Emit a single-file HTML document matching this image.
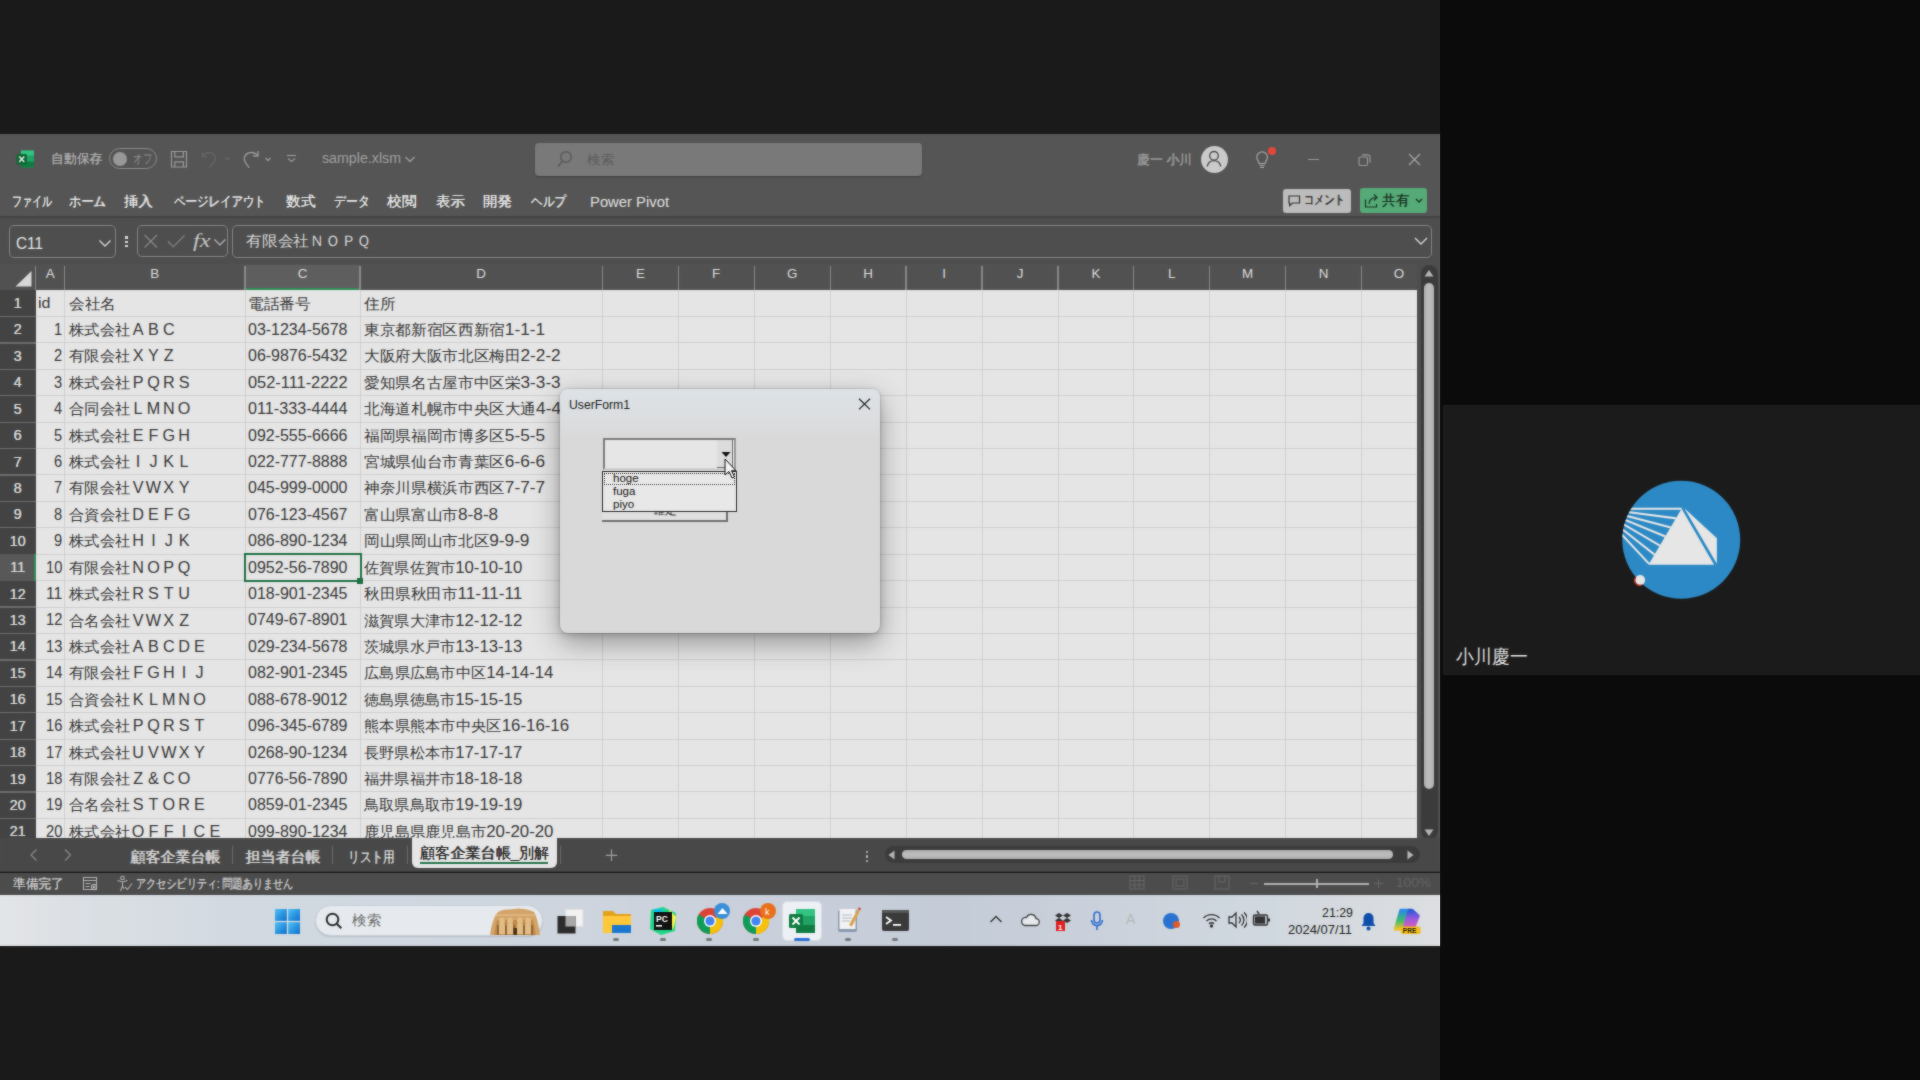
<!DOCTYPE html><html><head><meta charset="utf-8"><style>
*{margin:0;padding:0;box-sizing:border-box}
html,body{width:1920px;height:1080px;overflow:hidden;background:#0b0b0b;font-family:"Liberation Sans",sans-serif}
.a{position:absolute}
.t{position:absolute;white-space:nowrap;line-height:1;transform-origin:0 0}
.fit{display:inline-block}
.d{font-size:16.5px;line-height:0}.fw{display:inline-block;width:15px;text-align:center;font-size:15.8px;line-height:0}</style></head><body><div style="position:absolute;left:0;top:0;width:1920px;height:1080px"><div class="a" style="left:0;top:0;width:1440px;height:1080px;background:#1b1b1b"></div>
<div class="a" style="left:0;top:134px;width:1440px;height:83px;background:#555555"></div>
<div class="a" style="left:0;top:216px;width:1440px;height:2px;background:#444444"></div>
<div class="a" style="left:0;top:218px;width:1440px;height:46px;background:#4f4f4f"></div>
<div class="a" style="left:0;top:264px;width:1440px;height:26px;background:#525252"></div>
<svg class="a" style="left:16px;top:150px" width="19" height="18" viewBox="0 0 19 18">
<rect x="5" y="0.5" width="13" height="17" rx="1" fill="#21a366"/>
<rect x="5" y="0.5" width="13" height="5" fill="#33c481"/>
<rect x="5" y="11.5" width="13" height="6" fill="#107c41"/>
<rect x="0.5" y="4" width="10.5" height="10.5" rx="1.5" fill="#0e6a34"/>
<path d="M3.2 6.6 L8.3 12 M8.3 6.6 L3.2 12" stroke="#e8e8e8" stroke-width="1.5"/>
</svg>
<div class="t fit" style="left:51px;top:151.5px;font-size:13.2px;color:#a8a8a8;text-shadow:0.3px 0 0 #a8a8a8;--w:51px;transform:scaleX(0.9808);">自動保存</div>
<div class="a" style="left:109px;top:148px;width:48px;height:21px;border:1.3px solid #8a8a8a;border-radius:11px"></div>
<div class="a" style="left:112.5px;top:151.5px;width:14px;height:14px;border-radius:7px;background:#999"></div>
<div class="t fit" style="left:133px;top:152.5px;font-size:12.5px;color:#8f8f8f;--w:19px;transform:scaleX(0.7308);">オフ</div>
<svg class="a" style="left:170px;top:150px" width="19" height="19" viewBox="0 0 19 19" fill="none" stroke="#9a9a9a" stroke-width="1.2">
<path d="M1.5 1.5h15v15.5h-15z"/><path d="M4.8 1.5v5.3h8.6V1.5"/><path d="M4.8 17v-5.2h8.6V17"/></svg>
<svg class="a" style="left:200px;top:150px" width="34" height="19" viewBox="0 0 34 19" fill="none" stroke="#6a6a6a" stroke-width="1.2">
<path d="M2.5 2v4.5H7"/><path d="M3 6C5.5 2 13 1.5 15 6.5c1.5 4-3 8.5-5.5 11"/><path d="M25 7.5l2.5 2.5 2.5-2.5"/></svg>
<svg class="a" style="left:242px;top:150px" width="34" height="19" viewBox="0 0 34 19" fill="none" stroke="#9a9a9a" stroke-width="1.3">
<path d="M16 1v5h-5"/><path d="M15.5 5.5C13 1.5 5 1 2.5 7c-1.2 3 1.5 7 4.8 10.8"/><path d="M23.5 8l2.5 2.5 2.5-2.5"/></svg>
<svg class="a" style="left:286px;top:154px" width="11" height="10" viewBox="0 0 11 10" fill="none" stroke="#9a9a9a" stroke-width="1.2">
<path d="M1 1.5h9"/><path d="M2 4.5l3.5 3 3.5-3"/></svg>
<div class="t fit" style="left:322px;top:151px;font-size:14px;color:#a0a0a0;--w:79px;transform:scaleX(1.0155);">sample.xlsm</div>
<svg class="a" style="left:404px;top:155px" width="12" height="9" viewBox="0 0 12 9" fill="none" stroke="#a0a0a0" stroke-width="1.3">
<path d="M1.5 2l4.5 4.5 4.5-4.5"/></svg>
<div class="a" style="left:535px;top:143px;width:387px;height:33px;background:#797979;border-radius:4px;box-shadow:0 1px 1.5px rgba(0,0,0,.25)"></div>
<svg class="a" style="left:556px;top:150px" width="20" height="19" viewBox="0 0 20 19" fill="none" stroke="#5a5a5a" stroke-width="1.4">
<circle cx="10" cy="7" r="5.3"/><path d="M6.3 11L2 16.5"/></svg>
<div class="t fit" style="left:587px;top:152.5px;font-size:13px;color:#5c5c5c;--w:27px;transform:scaleX(1.0385);">検索</div>
<div class="t fit" style="left:1137px;top:152.5px;font-size:13px;color:#9a9a9a;text-shadow:0.35px 0 0 #9a9a9a;--w:55px;transform:scaleX(0.9888);">慶一 小川</div>
<div class="a" style="left:1201px;top:146px;width:26.5px;height:26.5px;border-radius:14px;background:#cacaca"></div>
<svg class="a" style="left:1201px;top:146px" width="26" height="26" viewBox="0 0 26 26" fill="none" stroke="#4a4a4a" stroke-width="1.3">
<circle cx="13" cy="9.8" r="4.3"/><path d="M6.2 20.5c1-4.2 3.6-5.8 6.8-5.8s5.8 1.6 6.8 5.8"/></svg>
<svg class="a" style="left:1255px;top:150px" width="16" height="19" viewBox="0 0 18 20" fill="none" stroke="#a5a5a5" stroke-width="1.3">
<path d="M2 7.5a6 6 0 1 1 12 0c0 2.8-2.2 4.2-2.6 7H4.6C4.2 11.7 2 10.3 2 7.5z"/><path d="M5 16.5h6M5.8 18.8h4.4"/></svg>
<div class="a" style="left:1268px;top:146.5px;width:8px;height:8px;border-radius:4px;background:#e5473b"></div>
<div class="a" style="left:1308px;top:158.5px;width:11px;height:1.3px;background:#999"></div>
<svg class="a" style="left:1357px;top:152.5px" width="15" height="14" viewBox="0 0 15 14" fill="none" stroke="#9a9a9a" stroke-width="1.2">
<rect x="2" y="4" width="8.5" height="8.5" rx="1.5"/><path d="M5 1.8h5.5a2.5 2.5 0 0 1 2.5 2.5v5.5"/></svg>
<svg class="a" style="left:1408px;top:153px" width="13" height="13" viewBox="0 0 13 13" fill="none" stroke="#a5a5a5" stroke-width="1.2">
<path d="M1 1l11 11M12 1L1 12"/></svg>
<div class="t fit" style="left:11.8px;top:193.5px;font-size:14px;color:#e4e4e4;text-shadow:0.4px 0 0 #e4e4e4;--w:40.2px;transform:scaleX(0.7179);">ファイル</div>
<div class="t fit" style="left:69.4px;top:193.5px;font-size:14px;color:#e4e4e4;text-shadow:0.4px 0 0 #e4e4e4;--w:36.6px;transform:scaleX(0.8714);">ホーム</div>
<div class="t fit" style="left:124.2px;top:193.5px;font-size:14px;color:#e4e4e4;text-shadow:0.4px 0 0 #e4e4e4;--w:28.7px;transform:scaleX(1.0250);">挿入</div>
<div class="t fit" style="left:173.8px;top:193.5px;font-size:14px;color:#e4e4e4;text-shadow:0.4px 0 0 #e4e4e4;--w:91.5px;transform:scaleX(0.8170);">ページレイアウト</div>
<div class="t fit" style="left:286.29999999999995px;top:193.5px;font-size:14px;color:#e4e4e4;text-shadow:0.4px 0 0 #e4e4e4;--w:29.5px;transform:scaleX(1.0536);">数式</div>
<div class="t fit" style="left:333.9px;top:193.5px;font-size:14px;color:#e4e4e4;text-shadow:0.4px 0 0 #e4e4e4;--w:35.5px;transform:scaleX(0.8452);">データ</div>
<div class="t fit" style="left:387.4px;top:193.5px;font-size:14px;color:#e4e4e4;text-shadow:0.4px 0 0 #e4e4e4;--w:29.5px;transform:scaleX(1.0536);">校閲</div>
<div class="t fit" style="left:435.7px;top:193.5px;font-size:14px;color:#e4e4e4;text-shadow:0.4px 0 0 #e4e4e4;--w:28.7px;transform:scaleX(1.0250);">表示</div>
<div class="t fit" style="left:483.2px;top:193.5px;font-size:14px;color:#e4e4e4;text-shadow:0.4px 0 0 #e4e4e4;--w:28.7px;transform:scaleX(1.0250);">開発</div>
<div class="t fit" style="left:530.6999999999999px;top:193.5px;font-size:14px;color:#e4e4e4;text-shadow:0.4px 0 0 #e4e4e4;--w:34.9px;transform:scaleX(0.8310);">ヘルプ</div>
<div class="t fit" style="left:589.5px;top:194.5px;font-size:14px;color:#e0e0e0;--w:79px;transform:scaleX(1.0575);">Power Pivot</div>
<div class="a" style="left:1283px;top:188.8px;width:68px;height:23.8px;background:#bdbdbd;border-radius:3px"></div>
<svg class="a" style="left:1288px;top:194.5px" width="13" height="13" viewBox="0 0 13 13" fill="none" stroke="#333" stroke-width="1.2">
<path d="M1 1h10.5v7H4.5l-2.8 2.6V8H1z"/></svg>
<div class="t fit" style="left:1304px;top:193px;font-size:13px;color:#333;text-shadow:0.35px 0 0 #333;--w:40.5px;transform:scaleX(0.7788);">コメント</div>
<div class="a" style="left:1360px;top:188px;width:67px;height:25px;background:#55aa77;border-radius:3px"></div>
<svg class="a" style="left:1364px;top:192px" width="16" height="17" viewBox="0 0 16 17" fill="none" stroke="#1b3524" stroke-width="1.2">
<path d="M1.5 7.5v7.5h11v-3"/><path d="M5 12c0-4.2 3-6.5 7-6.5"/><path d="M10 2.5l3 3-3 3"/></svg>
<div class="t fit" style="left:1382px;top:194px;font-size:13.5px;color:#1b3524;text-shadow:0.35px 0 0 #1b3524;--w:27px;transform:scaleX(0.9643);">共有</div>
<svg class="a" style="left:1414px;top:197px" width="10" height="7" viewBox="0 0 10 7" fill="none" stroke="#1b3524" stroke-width="1.3">
<path d="M2 2l3 3 3-3"/></svg>
<div class="a" style="left:8.5px;top:225.2px;width:107.5px;height:32.5px;border:1.2px solid #828282;border-radius:5px"></div>
<div class="t fit" style="left:16px;top:236px;font-size:16px;color:#e6e6e6;--w:27px;transform:scaleX(0.9584);">C11</div>
<svg class="a" style="left:98px;top:238px" width="14" height="10" viewBox="0 0 14 10" fill="none" stroke="#d4d4d4" stroke-width="1.4">
<path d="M1.5 2.5l5.5 5.5 5.5-5.5"/></svg>
<div class="a" style="left:125.2px;top:236.3px;width:2.6px;height:2.6px;background:#d8d8d8"></div>
<div class="a" style="left:125.2px;top:240.7px;width:2.6px;height:2.6px;background:#d8d8d8"></div>
<div class="a" style="left:125.2px;top:244.9px;width:2.6px;height:2.6px;background:#d8d8d8"></div>
<div class="a" style="left:137px;top:225.3px;width:90.8px;height:32.2px;border:1.2px solid #828282;border-radius:5px"></div>
<svg class="a" style="left:137px;top:225px" width="92" height="33" viewBox="0 0 92 33" fill="none" stroke-width="1.1">
<path d="M7.5 10l12.5 12.5M20 10L7.5 22.5" stroke="#8a8a8a"/><path d="M31 16.5l5.3 5.3L47.5 10.3" stroke="#8a8a8a"/><path d="M77.5 14.5l5.4 5.4 5.4-5.4" stroke="#b8b8b8" stroke-width="1.2"/></svg>
<div class="t fit" style="left:192.5px;top:231px;font-size:19px;color:#c8c8c8;font-style:italic;font-family:'Liberation Serif',serif;--w:17.5px;transform:scaleX(1.2756);">fx</div>
<div class="a" style="left:232px;top:225.2px;width:1199.5px;height:32.5px;border:1.2px solid #828282;border-radius:5px"></div>
<div class="t fit" style="left:246px;top:234px;font-size:14.5px;color:#d6d6d6;--w:125px;transform:scaleX(1.0504);">有限会社ＮＯＰＱ</div>
<svg class="a" style="left:1413px;top:236px" width="16" height="10" viewBox="0 0 16 10" fill="none" stroke="#d4d4d4" stroke-width="1.4">
<path d="M2 2l6 6 6-6"/></svg>
<div class="a" style="left:35.5px;top:290px;width:1381.8px;height:547.5px;background:#e5e5e5"></div>
<div class="a" style="left:0;top:290px;width:35.5px;height:547.5px;background:#444444"></div>
<div class="a" style="left:35.5px;top:315.92px;width:1381.8px;height:1px;background:#d0d0d0"></div>
<div class="a" style="left:0;top:315.82px;width:35.5px;height:1.3px;background:#6c6c6c"></div>
<div class="a" style="left:35.5px;top:342.34px;width:1381.8px;height:1px;background:#d0d0d0"></div>
<div class="a" style="left:0;top:342.24px;width:35.5px;height:1.3px;background:#6c6c6c"></div>
<div class="a" style="left:35.5px;top:368.76px;width:1381.8px;height:1px;background:#d0d0d0"></div>
<div class="a" style="left:0;top:368.66px;width:35.5px;height:1.3px;background:#6c6c6c"></div>
<div class="a" style="left:35.5px;top:395.18px;width:1381.8px;height:1px;background:#d0d0d0"></div>
<div class="a" style="left:0;top:395.08px;width:35.5px;height:1.3px;background:#6c6c6c"></div>
<div class="a" style="left:35.5px;top:421.60px;width:1381.8px;height:1px;background:#d0d0d0"></div>
<div class="a" style="left:0;top:421.50px;width:35.5px;height:1.3px;background:#6c6c6c"></div>
<div class="a" style="left:35.5px;top:448.02px;width:1381.8px;height:1px;background:#d0d0d0"></div>
<div class="a" style="left:0;top:447.92px;width:35.5px;height:1.3px;background:#6c6c6c"></div>
<div class="a" style="left:35.5px;top:474.44px;width:1381.8px;height:1px;background:#d0d0d0"></div>
<div class="a" style="left:0;top:474.34px;width:35.5px;height:1.3px;background:#6c6c6c"></div>
<div class="a" style="left:35.5px;top:500.86px;width:1381.8px;height:1px;background:#d0d0d0"></div>
<div class="a" style="left:0;top:500.76px;width:35.5px;height:1.3px;background:#6c6c6c"></div>
<div class="a" style="left:35.5px;top:527.28px;width:1381.8px;height:1px;background:#d0d0d0"></div>
<div class="a" style="left:0;top:527.18px;width:35.5px;height:1.3px;background:#6c6c6c"></div>
<div class="a" style="left:35.5px;top:553.70px;width:1381.8px;height:1px;background:#d0d0d0"></div>
<div class="a" style="left:0;top:553.60px;width:35.5px;height:1.3px;background:#6c6c6c"></div>
<div class="a" style="left:35.5px;top:580.12px;width:1381.8px;height:1px;background:#d0d0d0"></div>
<div class="a" style="left:0;top:580.02px;width:35.5px;height:1.3px;background:#6c6c6c"></div>
<div class="a" style="left:35.5px;top:606.54px;width:1381.8px;height:1px;background:#d0d0d0"></div>
<div class="a" style="left:0;top:606.44px;width:35.5px;height:1.3px;background:#6c6c6c"></div>
<div class="a" style="left:35.5px;top:632.96px;width:1381.8px;height:1px;background:#d0d0d0"></div>
<div class="a" style="left:0;top:632.86px;width:35.5px;height:1.3px;background:#6c6c6c"></div>
<div class="a" style="left:35.5px;top:659.38px;width:1381.8px;height:1px;background:#d0d0d0"></div>
<div class="a" style="left:0;top:659.28px;width:35.5px;height:1.3px;background:#6c6c6c"></div>
<div class="a" style="left:35.5px;top:685.80px;width:1381.8px;height:1px;background:#d0d0d0"></div>
<div class="a" style="left:0;top:685.70px;width:35.5px;height:1.3px;background:#6c6c6c"></div>
<div class="a" style="left:35.5px;top:712.22px;width:1381.8px;height:1px;background:#d0d0d0"></div>
<div class="a" style="left:0;top:712.12px;width:35.5px;height:1.3px;background:#6c6c6c"></div>
<div class="a" style="left:35.5px;top:738.64px;width:1381.8px;height:1px;background:#d0d0d0"></div>
<div class="a" style="left:0;top:738.54px;width:35.5px;height:1.3px;background:#6c6c6c"></div>
<div class="a" style="left:35.5px;top:765.06px;width:1381.8px;height:1px;background:#d0d0d0"></div>
<div class="a" style="left:0;top:764.96px;width:35.5px;height:1.3px;background:#6c6c6c"></div>
<div class="a" style="left:35.5px;top:791.48px;width:1381.8px;height:1px;background:#d0d0d0"></div>
<div class="a" style="left:0;top:791.38px;width:35.5px;height:1.3px;background:#6c6c6c"></div>
<div class="a" style="left:35.5px;top:817.90px;width:1381.8px;height:1px;background:#d0d0d0"></div>
<div class="a" style="left:0;top:817.80px;width:35.5px;height:1.3px;background:#6c6c6c"></div>
<div class="a" style="left:64.20px;top:290px;width:1px;height:547.5px;background:#d0d0d0"></div>
<div class="a" style="left:34.90px;top:265.5px;width:1.2px;height:24.5px;background:#888"></div>
<div class="a" style="left:244.50px;top:290px;width:1px;height:547.5px;background:#d0d0d0"></div>
<div class="a" style="left:64.10px;top:265.5px;width:1.2px;height:24.5px;background:#888"></div>
<div class="a" style="left:359.50px;top:290px;width:1px;height:547.5px;background:#d0d0d0"></div>
<div class="a" style="left:244.40px;top:265.5px;width:1.2px;height:24.5px;background:#888"></div>
<div class="a" style="left:602.00px;top:290px;width:1px;height:547.5px;background:#d0d0d0"></div>
<div class="a" style="left:359.40px;top:265.5px;width:1.2px;height:24.5px;background:#888"></div>
<div class="a" style="left:677.80px;top:290px;width:1px;height:547.5px;background:#d0d0d0"></div>
<div class="a" style="left:601.90px;top:265.5px;width:1.2px;height:24.5px;background:#888"></div>
<div class="a" style="left:753.70px;top:290px;width:1px;height:547.5px;background:#d0d0d0"></div>
<div class="a" style="left:677.70px;top:265.5px;width:1.2px;height:24.5px;background:#888"></div>
<div class="a" style="left:829.70px;top:290px;width:1px;height:547.5px;background:#d0d0d0"></div>
<div class="a" style="left:753.60px;top:265.5px;width:1.2px;height:24.5px;background:#888"></div>
<div class="a" style="left:905.50px;top:290px;width:1px;height:547.5px;background:#d0d0d0"></div>
<div class="a" style="left:829.60px;top:265.5px;width:1.2px;height:24.5px;background:#888"></div>
<div class="a" style="left:981.50px;top:290px;width:1px;height:547.5px;background:#d0d0d0"></div>
<div class="a" style="left:905.40px;top:265.5px;width:1.2px;height:24.5px;background:#888"></div>
<div class="a" style="left:1057.50px;top:290px;width:1px;height:547.5px;background:#d0d0d0"></div>
<div class="a" style="left:981.40px;top:265.5px;width:1.2px;height:24.5px;background:#888"></div>
<div class="a" style="left:1133.30px;top:290px;width:1px;height:547.5px;background:#d0d0d0"></div>
<div class="a" style="left:1057.40px;top:265.5px;width:1.2px;height:24.5px;background:#888"></div>
<div class="a" style="left:1209.00px;top:290px;width:1px;height:547.5px;background:#d0d0d0"></div>
<div class="a" style="left:1133.20px;top:265.5px;width:1.2px;height:24.5px;background:#888"></div>
<div class="a" style="left:1285.00px;top:290px;width:1px;height:547.5px;background:#d0d0d0"></div>
<div class="a" style="left:1208.90px;top:265.5px;width:1.2px;height:24.5px;background:#888"></div>
<div class="a" style="left:1361.00px;top:290px;width:1px;height:547.5px;background:#d0d0d0"></div>
<div class="a" style="left:1284.90px;top:265.5px;width:1.2px;height:24.5px;background:#888"></div>
<div class="a" style="left:1360.90px;top:265.5px;width:1.2px;height:24.5px;background:#888"></div>
<div class="a" style="left:245px;top:264.5px;width:115px;height:25.5px;background:#5f5f5f"></div>
<div class="a" style="left:245px;top:288px;width:115px;height:2px;background:#2e8b55"></div>
<div class="a" style="left:244.4px;top:265.5px;width:1.2px;height:24.5px;background:#8a8a8a"></div>
<div class="a" style="left:359.4px;top:265.5px;width:1.2px;height:24.5px;background:#8a8a8a"></div>
<div class="t" style="left:30.1px;width:40px;text-align:center;top:266.7px;font-size:13.4px;color:#dcdcdc">A</div>
<div class="t" style="left:134.8px;width:40px;text-align:center;top:266.7px;font-size:13.4px;color:#dcdcdc">B</div>
<div class="t" style="left:282.5px;width:40px;text-align:center;top:266.7px;font-size:13.4px;color:#dcdcdc">C</div>
<div class="t" style="left:461.2px;width:40px;text-align:center;top:266.7px;font-size:13.4px;color:#dcdcdc">D</div>
<div class="t" style="left:620.4px;width:40px;text-align:center;top:266.7px;font-size:13.4px;color:#dcdcdc">E</div>
<div class="t" style="left:696.2px;width:40px;text-align:center;top:266.7px;font-size:13.4px;color:#dcdcdc">F</div>
<div class="t" style="left:772.2px;width:40px;text-align:center;top:266.7px;font-size:13.4px;color:#dcdcdc">G</div>
<div class="t" style="left:848.1px;width:40px;text-align:center;top:266.7px;font-size:13.4px;color:#dcdcdc">H</div>
<div class="t" style="left:924.0px;width:40px;text-align:center;top:266.7px;font-size:13.4px;color:#dcdcdc">I</div>
<div class="t" style="left:1000.0px;width:40px;text-align:center;top:266.7px;font-size:13.4px;color:#dcdcdc">J</div>
<div class="t" style="left:1075.9px;width:40px;text-align:center;top:266.7px;font-size:13.4px;color:#dcdcdc">K</div>
<div class="t" style="left:1151.7px;width:40px;text-align:center;top:266.7px;font-size:13.4px;color:#dcdcdc">L</div>
<div class="t" style="left:1227.5px;width:40px;text-align:center;top:266.7px;font-size:13.4px;color:#dcdcdc">M</div>
<div class="t" style="left:1303.5px;width:40px;text-align:center;top:266.7px;font-size:13.4px;color:#dcdcdc">N</div>
<div class="t" style="left:1379.0px;width:40px;text-align:center;top:266.7px;font-size:13.4px;color:#dcdcdc">O</div>
<svg class="a" style="left:14px;top:268px" width="20" height="20" viewBox="0 0 20 20"><path d="M1.5 18.5L17.5 3v15.5z" fill="#d8d8d8"/></svg>
<div class="a" style="left:0;top:554.20px;width:35.5px;height:26.42px;background:#595959"></div>
<div class="a" style="left:33.5px;top:554.20px;width:2px;height:26.42px;background:#2e8b55"></div>
<div class="t" style="left:0;width:35px;text-align:center;top:296.00px;font-size:14.5px;color:#d8d8d8;text-shadow:0.3px 0 0 #d8d8d8">1</div>
<div class="t" style="left:0;width:35px;text-align:center;top:322.42px;font-size:14.5px;color:#d8d8d8;text-shadow:0.3px 0 0 #d8d8d8">2</div>
<div class="t" style="left:0;width:35px;text-align:center;top:348.84px;font-size:14.5px;color:#d8d8d8;text-shadow:0.3px 0 0 #d8d8d8">3</div>
<div class="t" style="left:0;width:35px;text-align:center;top:375.26px;font-size:14.5px;color:#d8d8d8;text-shadow:0.3px 0 0 #d8d8d8">4</div>
<div class="t" style="left:0;width:35px;text-align:center;top:401.68px;font-size:14.5px;color:#d8d8d8;text-shadow:0.3px 0 0 #d8d8d8">5</div>
<div class="t" style="left:0;width:35px;text-align:center;top:428.10px;font-size:14.5px;color:#d8d8d8;text-shadow:0.3px 0 0 #d8d8d8">6</div>
<div class="t" style="left:0;width:35px;text-align:center;top:454.52px;font-size:14.5px;color:#d8d8d8;text-shadow:0.3px 0 0 #d8d8d8">7</div>
<div class="t" style="left:0;width:35px;text-align:center;top:480.94px;font-size:14.5px;color:#d8d8d8;text-shadow:0.3px 0 0 #d8d8d8">8</div>
<div class="t" style="left:0;width:35px;text-align:center;top:507.36px;font-size:14.5px;color:#d8d8d8;text-shadow:0.3px 0 0 #d8d8d8">9</div>
<div class="t" style="left:0;width:35px;text-align:center;top:533.78px;font-size:14.5px;color:#d8d8d8;text-shadow:0.3px 0 0 #d8d8d8">10</div>
<div class="t" style="left:0;width:35px;text-align:center;top:560.20px;font-size:14.5px;color:#d8d8d8;text-shadow:0.3px 0 0 #d8d8d8">11</div>
<div class="t" style="left:0;width:35px;text-align:center;top:586.62px;font-size:14.5px;color:#d8d8d8;text-shadow:0.3px 0 0 #d8d8d8">12</div>
<div class="t" style="left:0;width:35px;text-align:center;top:613.04px;font-size:14.5px;color:#d8d8d8;text-shadow:0.3px 0 0 #d8d8d8">13</div>
<div class="t" style="left:0;width:35px;text-align:center;top:639.46px;font-size:14.5px;color:#d8d8d8;text-shadow:0.3px 0 0 #d8d8d8">14</div>
<div class="t" style="left:0;width:35px;text-align:center;top:665.88px;font-size:14.5px;color:#d8d8d8;text-shadow:0.3px 0 0 #d8d8d8">15</div>
<div class="t" style="left:0;width:35px;text-align:center;top:692.30px;font-size:14.5px;color:#d8d8d8;text-shadow:0.3px 0 0 #d8d8d8">16</div>
<div class="t" style="left:0;width:35px;text-align:center;top:718.72px;font-size:14.5px;color:#d8d8d8;text-shadow:0.3px 0 0 #d8d8d8">17</div>
<div class="t" style="left:0;width:35px;text-align:center;top:745.14px;font-size:14.5px;color:#d8d8d8;text-shadow:0.3px 0 0 #d8d8d8">18</div>
<div class="t" style="left:0;width:35px;text-align:center;top:771.56px;font-size:14.5px;color:#d8d8d8;text-shadow:0.3px 0 0 #d8d8d8">19</div>
<div class="t" style="left:0;width:35px;text-align:center;top:797.98px;font-size:14.5px;color:#d8d8d8;text-shadow:0.3px 0 0 #d8d8d8">20</div>
<div class="t" style="left:0;width:35px;text-align:center;top:824.40px;font-size:14.5px;color:#d8d8d8;text-shadow:0.3px 0 0 #d8d8d8">21</div>
<div class="a" style="left:0;top:0;width:1417.3px;height:837.5px;overflow:hidden">
<div class="t fit" style="left:38px;top:295.3px;font-size:15px;color:#383838;--w:12.5px;transform:scaleX(1.0695);">id</div>
<div class="t fit" style="left:68.5px;top:295.5px;font-size:15px;color:#383838;--w:47px;transform:scaleX(1.0444);">会社名</div>
<div class="t fit" style="left:248px;top:295.5px;font-size:15px;color:#383838;--w:63px;transform:scaleX(1.0500);">電話番号</div>
<div class="t fit" style="left:363.5px;top:295.5px;font-size:15px;color:#383838;--w:31.5px;transform:scaleX(1.0500);">住所</div>
<div class="t fit" style="left:53.85px;top:320.82px;font-size:16.5px;color:#383838;--w:8.15px;transform:scaleX(0.8871);">1</div>
<div class="t fit" style="left:68.5px;top:321.92px;font-size:15px;color:#383838;--w:107.45px;transform:scaleX(1.0233);">株式会社<span class="fw">A</span><span class="fw">B</span><span class="fw">C</span></div>
<div class="t fit" style="left:248px;top:320.82px;font-size:16.5px;color:#383838;--w:99.5px;transform:scaleX(0.9682);">03-1234-5678</div>
<div class="t fit" style="left:363.5px;top:321.92px;font-size:15px;color:#383838;--w:181.08px;transform:scaleX(1.0435);">東京都新宿区西新宿<span class="d">1-1-1</span></div>
<div class="t fit" style="left:53.85px;top:347.24px;font-size:16.5px;color:#383838;--w:8.15px;transform:scaleX(0.8871);">2</div>
<div class="t fit" style="left:68.5px;top:348.34px;font-size:15px;color:#383838;--w:107.45px;transform:scaleX(1.0233);">有限会社<span class="fw">X</span><span class="fw">Y</span><span class="fw">Z</span></div>
<div class="t fit" style="left:248px;top:347.24px;font-size:16.5px;color:#383838;--w:99.5px;transform:scaleX(0.9682);">06-9876-5432</div>
<div class="t fit" style="left:363.5px;top:348.34px;font-size:15px;color:#383838;--w:196.7px;transform:scaleX(1.0433);">大阪府大阪市北区梅田<span class="d">2-2-2</span></div>
<div class="t fit" style="left:53.85px;top:373.66px;font-size:16.5px;color:#383838;--w:8.15px;transform:scaleX(0.8871);">3</div>
<div class="t fit" style="left:68.5px;top:374.76px;font-size:15px;color:#383838;--w:122.8px;transform:scaleX(1.0233);">株式会社<span class="fw">P</span><span class="fw">Q</span><span class="fw">R</span><span class="fw">S</span></div>
<div class="t fit" style="left:248px;top:373.66px;font-size:16.5px;color:#383838;--w:99.5px;transform:scaleX(0.9919);">052-111-2222</div>
<div class="t fit" style="left:363.5px;top:374.76px;font-size:15px;color:#383838;--w:196.7px;transform:scaleX(1.0433);">愛知県名古屋市中区栄<span class="d">3-3-3</span></div>
<div class="t fit" style="left:53.85px;top:400.08px;font-size:16.5px;color:#383838;--w:8.15px;transform:scaleX(0.8871);">4</div>
<div class="t fit" style="left:68.5px;top:401.18px;font-size:15px;color:#383838;--w:122.8px;transform:scaleX(1.0233);">合同会社<span class="fw">L</span><span class="fw">M</span><span class="fw">N</span><span class="fw">O</span></div>
<div class="t fit" style="left:248px;top:400.08px;font-size:16.5px;color:#383838;--w:99.5px;transform:scaleX(0.9800);">011-333-4444</div>
<div class="t fit" style="left:363.5px;top:401.18px;font-size:15px;color:#383838;--w:212.32px;transform:scaleX(1.0432);">北海道札幌市中央区大通<span class="d">4-4-4</span></div>
<div class="t fit" style="left:53.85px;top:426.5px;font-size:16.5px;color:#383838;--w:8.15px;transform:scaleX(0.8871);">5</div>
<div class="t fit" style="left:68.5px;top:427.6px;font-size:15px;color:#383838;--w:122.8px;transform:scaleX(1.0233);">株式会社<span class="fw">E</span><span class="fw">F</span><span class="fw">G</span><span class="fw">H</span></div>
<div class="t fit" style="left:248px;top:426.5px;font-size:16.5px;color:#383838;--w:99.5px;transform:scaleX(0.9682);">092-555-6666</div>
<div class="t fit" style="left:363.5px;top:427.6px;font-size:15px;color:#383838;--w:181.08px;transform:scaleX(1.0435);">福岡県福岡市博多区<span class="d">5-5-5</span></div>
<div class="t fit" style="left:53.85px;top:452.92px;font-size:16.5px;color:#383838;--w:8.15px;transform:scaleX(0.8871);">6</div>
<div class="t fit" style="left:68.5px;top:454.02px;font-size:15px;color:#383838;--w:122.8px;transform:scaleX(1.0233);">株式会社<span class="fw">I</span><span class="fw">J</span><span class="fw">K</span><span class="fw">L</span></div>
<div class="t fit" style="left:248px;top:452.92px;font-size:16.5px;color:#383838;--w:99.5px;transform:scaleX(0.9682);">022-777-8888</div>
<div class="t fit" style="left:363.5px;top:454.02px;font-size:15px;color:#383838;--w:181.08px;transform:scaleX(1.0435);">宮城県仙台市青葉区<span class="d">6-6-6</span></div>
<div class="t fit" style="left:53.85px;top:479.34px;font-size:16.5px;color:#383838;--w:8.15px;transform:scaleX(0.8871);">7</div>
<div class="t fit" style="left:68.5px;top:480.44px;font-size:15px;color:#383838;--w:122.8px;transform:scaleX(1.0233);">有限会社<span class="fw">V</span><span class="fw">W</span><span class="fw">X</span><span class="fw">Y</span></div>
<div class="t fit" style="left:248px;top:479.34px;font-size:16.5px;color:#383838;--w:99.5px;transform:scaleX(0.9682);">045-999-0000</div>
<div class="t fit" style="left:363.5px;top:480.44px;font-size:15px;color:#383838;--w:181.08px;transform:scaleX(1.0435);">神奈川県横浜市西区<span class="d">7-7-7</span></div>
<div class="t fit" style="left:53.85px;top:505.76px;font-size:16.5px;color:#383838;--w:8.15px;transform:scaleX(0.8871);">8</div>
<div class="t fit" style="left:68.5px;top:506.86px;font-size:15px;color:#383838;--w:122.8px;transform:scaleX(1.0233);">合資会社<span class="fw">D</span><span class="fw">E</span><span class="fw">F</span><span class="fw">G</span></div>
<div class="t fit" style="left:248px;top:505.76px;font-size:16.5px;color:#383838;--w:99.5px;transform:scaleX(0.9682);">076-123-4567</div>
<div class="t fit" style="left:363.5px;top:506.86px;font-size:15px;color:#383838;--w:134.22px;transform:scaleX(1.0443);">富山県富山市<span class="d">8-8-8</span></div>
<div class="t fit" style="left:53.85px;top:532.18px;font-size:16.5px;color:#383838;--w:8.15px;transform:scaleX(0.8871);">9</div>
<div class="t fit" style="left:68.5px;top:533.28px;font-size:15px;color:#383838;--w:122.8px;transform:scaleX(1.0233);">株式会社<span class="fw">H</span><span class="fw">I</span><span class="fw">J</span><span class="fw">K</span></div>
<div class="t fit" style="left:248px;top:532.18px;font-size:16.5px;color:#383838;--w:99.5px;transform:scaleX(0.9682);">086-890-1234</div>
<div class="t fit" style="left:363.5px;top:533.28px;font-size:15px;color:#383838;--w:165.46px;transform:scaleX(1.0437);">岡山県岡山市北区<span class="d">9-9-9</span></div>
<div class="t fit" style="left:45.7px;top:558.6px;font-size:16.5px;color:#383838;--w:16.3px;transform:scaleX(0.8878);">10</div>
<div class="t fit" style="left:68.5px;top:559.7px;font-size:15px;color:#383838;--w:122.8px;transform:scaleX(1.0233);">有限会社<span class="fw">N</span><span class="fw">O</span><span class="fw">P</span><span class="fw">Q</span></div>
<div class="t fit" style="left:248px;top:558.6px;font-size:16.5px;color:#383838;--w:99.5px;transform:scaleX(0.9682);">0952-56-7890</div>
<div class="t fit" style="left:363.5px;top:559.7px;font-size:15px;color:#383838;--w:158.22px;transform:scaleX(1.0138);">佐賀県佐賀市<span class="d">10-10-10</span></div>
<div class="t fit" style="left:45.7px;top:585.02px;font-size:16.5px;color:#383838;--w:16.3px;transform:scaleX(0.9510);">11</div>
<div class="t fit" style="left:68.5px;top:586.12px;font-size:15px;color:#383838;--w:122.8px;transform:scaleX(1.0233);">株式会社<span class="fw">R</span><span class="fw">S</span><span class="fw">T</span><span class="fw">U</span></div>
<div class="t fit" style="left:248px;top:585.02px;font-size:16.5px;color:#383838;--w:99.5px;transform:scaleX(0.9682);">018-901-2345</div>
<div class="t fit" style="left:363.5px;top:586.12px;font-size:15px;color:#383838;--w:158.22px;transform:scaleX(1.0384);">秋田県秋田市<span class="d">11-11-11</span></div>
<div class="t fit" style="left:45.7px;top:611.44px;font-size:16.5px;color:#383838;--w:16.3px;transform:scaleX(0.8878);">12</div>
<div class="t fit" style="left:68.5px;top:612.54px;font-size:15px;color:#383838;--w:122.8px;transform:scaleX(1.0233);">合名会社<span class="fw">V</span><span class="fw">W</span><span class="fw">X</span><span class="fw">Z</span></div>
<div class="t fit" style="left:248px;top:611.44px;font-size:16.5px;color:#383838;--w:99.5px;transform:scaleX(0.9682);">0749-67-8901</div>
<div class="t fit" style="left:363.5px;top:612.54px;font-size:15px;color:#383838;--w:158.22px;transform:scaleX(1.0138);">滋賀県大津市<span class="d">12-12-12</span></div>
<div class="t fit" style="left:45.7px;top:637.86px;font-size:16.5px;color:#383838;--w:16.3px;transform:scaleX(0.8878);">13</div>
<div class="t fit" style="left:68.5px;top:638.96px;font-size:15px;color:#383838;--w:138.15px;transform:scaleX(1.0233);">株式会社<span class="fw">A</span><span class="fw">B</span><span class="fw">C</span><span class="fw">D</span><span class="fw">E</span></div>
<div class="t fit" style="left:248px;top:637.86px;font-size:16.5px;color:#383838;--w:99.5px;transform:scaleX(0.9682);">029-234-5678</div>
<div class="t fit" style="left:363.5px;top:638.96px;font-size:15px;color:#383838;--w:158.22px;transform:scaleX(1.0138);">茨城県水戸市<span class="d">13-13-13</span></div>
<div class="t fit" style="left:45.7px;top:664.28px;font-size:16.5px;color:#383838;--w:16.3px;transform:scaleX(0.8878);">14</div>
<div class="t fit" style="left:68.5px;top:665.38px;font-size:15px;color:#383838;--w:138.15px;transform:scaleX(1.0233);">有限会社<span class="fw">F</span><span class="fw">G</span><span class="fw">H</span><span class="fw">I</span><span class="fw">J</span></div>
<div class="t fit" style="left:248px;top:664.28px;font-size:16.5px;color:#383838;--w:99.5px;transform:scaleX(0.9682);">082-901-2345</div>
<div class="t fit" style="left:363.5px;top:665.38px;font-size:15px;color:#383838;--w:189.46px;transform:scaleX(1.0183);">広島県広島市中区<span class="d">14-14-14</span></div>
<div class="t fit" style="left:45.7px;top:690.7px;font-size:16.5px;color:#383838;--w:16.3px;transform:scaleX(0.8878);">15</div>
<div class="t fit" style="left:68.5px;top:691.8px;font-size:15px;color:#383838;--w:138.15px;transform:scaleX(1.0233);">合資会社<span class="fw">K</span><span class="fw">L</span><span class="fw">M</span><span class="fw">N</span><span class="fw">O</span></div>
<div class="t fit" style="left:248px;top:690.7px;font-size:16.5px;color:#383838;--w:99.5px;transform:scaleX(0.9682);">088-678-9012</div>
<div class="t fit" style="left:363.5px;top:691.8px;font-size:15px;color:#383838;--w:158.22px;transform:scaleX(1.0138);">徳島県徳島市<span class="d">15-15-15</span></div>
<div class="t fit" style="left:45.7px;top:717.12px;font-size:16.5px;color:#383838;--w:16.3px;transform:scaleX(0.8878);">16</div>
<div class="t fit" style="left:68.5px;top:718.22px;font-size:15px;color:#383838;--w:138.15px;transform:scaleX(1.0233);">株式会社<span class="fw">P</span><span class="fw">Q</span><span class="fw">R</span><span class="fw">S</span><span class="fw">T</span></div>
<div class="t fit" style="left:248px;top:717.12px;font-size:16.5px;color:#383838;--w:99.5px;transform:scaleX(0.9682);">096-345-6789</div>
<div class="t fit" style="left:363.5px;top:718.22px;font-size:15px;color:#383838;--w:205.08px;transform:scaleX(1.0200);">熊本県熊本市中央区<span class="d">16-16-16</span></div>
<div class="t fit" style="left:45.7px;top:743.54px;font-size:16.5px;color:#383838;--w:16.3px;transform:scaleX(0.8878);">17</div>
<div class="t fit" style="left:68.5px;top:744.64px;font-size:15px;color:#383838;--w:138.15px;transform:scaleX(1.0233);">株式会社<span class="fw">U</span><span class="fw">V</span><span class="fw">W</span><span class="fw">X</span><span class="fw">Y</span></div>
<div class="t fit" style="left:248px;top:743.54px;font-size:16.5px;color:#383838;--w:99.5px;transform:scaleX(0.9682);">0268-90-1234</div>
<div class="t fit" style="left:363.5px;top:744.64px;font-size:15px;color:#383838;--w:158.22px;transform:scaleX(1.0138);">長野県松本市<span class="d">17-17-17</span></div>
<div class="t fit" style="left:45.7px;top:769.96px;font-size:16.5px;color:#383838;--w:16.3px;transform:scaleX(0.8878);">18</div>
<div class="t fit" style="left:68.5px;top:771.06px;font-size:15px;color:#383838;--w:122.8px;transform:scaleX(1.0233);">有限会社<span class="fw">Z</span><span class="fw">&amp;</span><span class="fw">C</span><span class="fw">O</span></div>
<div class="t fit" style="left:248px;top:769.96px;font-size:16.5px;color:#383838;--w:99.5px;transform:scaleX(0.9682);">0776-56-7890</div>
<div class="t fit" style="left:363.5px;top:771.06px;font-size:15px;color:#383838;--w:158.22px;transform:scaleX(1.0138);">福井県福井市<span class="d">18-18-18</span></div>
<div class="t fit" style="left:45.7px;top:796.38px;font-size:16.5px;color:#383838;--w:16.3px;transform:scaleX(0.8878);">19</div>
<div class="t fit" style="left:68.5px;top:797.48px;font-size:15px;color:#383838;--w:138.15px;transform:scaleX(1.0233);">合名会社<span class="fw">S</span><span class="fw">T</span><span class="fw">O</span><span class="fw">R</span><span class="fw">E</span></div>
<div class="t fit" style="left:248px;top:796.38px;font-size:16.5px;color:#383838;--w:99.5px;transform:scaleX(0.9682);">0859-01-2345</div>
<div class="t fit" style="left:363.5px;top:797.48px;font-size:15px;color:#383838;--w:158.22px;transform:scaleX(1.0138);">鳥取県鳥取市<span class="d">19-19-19</span></div>
<div class="t fit" style="left:45.7px;top:822.8px;font-size:16.5px;color:#383838;--w:16.3px;transform:scaleX(0.8878);">20</div>
<div class="t fit" style="left:68.5px;top:823.9px;font-size:15px;color:#383838;--w:153.5px;transform:scaleX(1.0233);">株式会社<span class="fw">O</span><span class="fw">F</span><span class="fw">F</span><span class="fw">I</span><span class="fw">C</span><span class="fw">E</span></div>
<div class="t fit" style="left:248px;top:822.8px;font-size:16.5px;color:#383838;--w:99.5px;transform:scaleX(0.9682);">099-890-1234</div>
<div class="t fit" style="left:363.5px;top:823.9px;font-size:15px;color:#383838;--w:189.46px;transform:scaleX(1.0183);">鹿児島県鹿児島市<span class="d">20-20-20</span></div>
</div>
<div class="a" style="left:243.5px;top:552.70px;width:118px;height:29.42px;border:2px solid #1f7044"></div>
<div class="a" style="left:357px;top:578.12px;width:6px;height:5.5px;background:#1d6e42"></div>
<div class="a" style="left:1417.3px;top:264px;width:22.7px;height:574px;background:#4f4f4f"></div>
<div class="a" style="left:1420.5px;top:265.3px;width:17px;height:574.5px;background:#3c3c3c;border-radius:9px"></div>
<svg class="a" style="left:1423px;top:268px" width="12" height="10" viewBox="0 0 12 10"><path d="M1.5 8.5L6 2l4.5 6.5z" fill="#b5b5b5"/></svg>
<div class="a" style="left:1424px;top:283px;width:10px;height:506px;background:linear-gradient(90deg,#b0b0b0,#bdbdbd 50%,#b0b0b0);border-radius:5px"></div>
<svg class="a" style="left:1423px;top:828px" width="12" height="10" viewBox="0 0 12 10"><path d="M1.5 1.5h9L6 8z" fill="#b5b5b5"/></svg>
<div class="a" style="left:0;top:837.5px;width:1440px;height:34.3px;background:#494949"></div>
<div class="a" style="left:0;top:871.3px;width:1440px;height:1.2px;background:#393939"></div>
<svg class="a" style="left:27px;top:847px" width="52" height="16" viewBox="0 0 52 16" fill="none" stroke="#8a8a8a" stroke-width="1.2">
<path d="M9.5 2.5L4 8l5.5 5.5"/><path d="M38 2.5l5.5 5.5L38 13.5"/></svg>
<div class="t fit" style="left:130.2px;top:849.5px;font-size:14.5px;color:#d4d4d4;text-shadow:0.35px 0 0 #d4d4d4;--w:90px;transform:scaleX(1.0000);">顧客企業台帳</div>
<div class="t fit" style="left:245.2px;top:849.5px;font-size:14.5px;color:#d4d4d4;text-shadow:0.35px 0 0 #d4d4d4;--w:75px;transform:scaleX(1.0000);">担当者台帳</div>
<div class="t fit" style="left:347.7px;top:849.5px;font-size:14.5px;color:#d4d4d4;text-shadow:0.35px 0 0 #d4d4d4;--w:46.5px;transform:scaleX(0.7750);">リスト用</div>
<div class="a" style="left:232.0px;top:846px;width:1.1px;height:18.3px;background:#6a6a6a"></div>
<div class="a" style="left:332.0px;top:846px;width:1.1px;height:18.3px;background:#6a6a6a"></div>
<div class="a" style="left:407.0px;top:846px;width:1.1px;height:18.3px;background:#6a6a6a"></div>
<div class="a" style="left:560.3px;top:846px;width:1.1px;height:18.3px;background:#6a6a6a"></div>
<div class="a" style="left:411.7px;top:837.5px;width:145px;height:30.2px;background:#e6e6e6;border-radius:0 0 6px 6px"></div>
<div class="t fit" style="left:419.5px;top:845.5px;font-size:14.5px;color:#2e2e2e;text-shadow:0.3px 0 0 #2e2e2e;--w:129px;transform:scaleX(1.0072);">顧客企業台帳_別解</div>
<div class="a" style="left:420px;top:861.8px;width:128px;height:2.5px;background:#26744a"></div>
<svg class="a" style="left:604px;top:848px" width="15" height="15" viewBox="0 0 15 15" fill="none" stroke="#a0a0a0" stroke-width="1.2">
<path d="M7.5 1.5v11.5M1.8 7.3h11.5"/></svg>
<div class="a" style="left:865.5px;top:850.5px;width:2.6px;height:2.6px;background:#c0c0c0;border-radius:2px"></div>
<div class="a" style="left:865.5px;top:855px;width:2.6px;height:2.6px;background:#c0c0c0;border-radius:2px"></div>
<div class="a" style="left:865.5px;top:859.5px;width:2.6px;height:2.6px;background:#c0c0c0;border-radius:2px"></div>
<div class="a" style="left:884.5px;top:846px;width:535px;height:17px;background:#3c3c3c;border-radius:9px"></div>
<svg class="a" style="left:886px;top:849px" width="10" height="12" viewBox="0 0 10 12"><path d="M8.5 1.5v9L2.5 6z" fill="#b5b5b5"/></svg>
<div class="a" style="left:901.5px;top:850px;width:491.5px;height:9.2px;background:linear-gradient(180deg,#b0b0b0,#bdbdbd 50%,#b0b0b0);border-radius:5px"></div>
<svg class="a" style="left:1406px;top:849px" width="10" height="12" viewBox="0 0 10 12"><path d="M1.5 1.5v9L7.5 6z" fill="#b5b5b5"/></svg>
<div class="a" style="left:0;top:872.5px;width:1440px;height:22px;background:#4d4d4d"></div>
<div class="t fit" style="left:12.6px;top:877.5px;font-size:12.5px;color:#c4c4c4;text-shadow:0.35px 0 0 #c4c4c4;--w:50.5px;transform:scaleX(0.9712);">準備完了</div>
<svg class="a" style="left:82px;top:875.5px" width="18" height="16" viewBox="0 0 18 16" fill="none" stroke="#b0b0b0" stroke-width="1.1">
<path d="M1.5 1.5h13v12h-13z"/><path d="M1.5 4.5h13M3.5 7.5h5M3.5 10.5h4"/><circle cx="12" cy="11" r="2.6"/><circle cx="12" cy="11" r="1" fill="#b0b0b0"/></svg>
<svg class="a" style="left:116px;top:875px" width="18" height="17" viewBox="0 0 18 17" fill="none" stroke="#b0b0b0" stroke-width="1.1">
<circle cx="6.5" cy="3" r="1.8"/><path d="M1.5 5.5l5 1.5 5-1.5M6.5 7v4l-2 5M6.5 11l1.5 3"/><path d="M9 12l2.5 2.5 4.5-6"/></svg>
<div class="t fit" style="left:136px;top:877.5px;font-size:12.5px;color:#c4c4c4;text-shadow:0.35px 0 0 #c4c4c4;--w:157px;transform:scaleX(0.7774);">アクセシビリティ: 問題ありません</div>
<svg class="a" style="left:1128px;top:874px" width="110" height="18" viewBox="0 0 110 18" fill="none" stroke="#666" stroke-width="1.1">
<rect x="2" y="2" width="14" height="13"/><path d="M2 6.5h14M2 11h14M6.7 2v13M11.3 2v13"/>
<rect x="45" y="2" width="14" height="13"/><rect x="48" y="5" width="8" height="7"/>
<rect x="87" y="2" width="14" height="13"/><path d="M91 2v6h6V2"/></svg>
<div class="a" style="left:1250px;top:883px;width:8px;height:1px;background:#666"></div>
<div class="a" style="left:1264px;top:883px;width:105px;height:1.5px;background:#b0b0b0"></div>
<div class="a" style="left:1316px;top:879px;width:1.6px;height:9px;background:#b0b0b0"></div>
<div class="a" style="left:1374px;top:883px;width:9px;height:1px;background:#666"></div>
<div class="a" style="left:1378px;top:879px;width:1px;height:9px;background:#666"></div>
<div class="t fit" style="left:1396px;top:876px;font-size:13px;color:#646464;--w:35px;transform:scaleX(1.0526);">100%</div>
<div class="a" style="left:0;top:894.5px;width:1440px;height:51.5px;background:linear-gradient(90deg,#e3e5e7 0%,#dadfe4 6%,#d2d9e1 18%,#ced5de 40%,#c5ccd8 66%,#d1d8df 88%,#dcdee0 100%)"></div>
<svg class="a" style="left:275px;top:909px" width="25" height="25" viewBox="0 0 25 25">
<defs><linearGradient id="wg" x1="0" y1="0" x2="1" y2="1"><stop offset="0" stop-color="#52c2f4"/><stop offset="1" stop-color="#0b6fce"/></linearGradient></defs>
<rect x="0" y="0" width="11.8" height="11.8" fill="url(#wg)"/><rect x="13.2" y="0" width="11.8" height="11.8" fill="url(#wg)"/>
<rect x="0" y="13.2" width="11.8" height="11.8" fill="url(#wg)"/><rect x="13.2" y="13.2" width="11.8" height="11.8" fill="url(#wg)"/></svg>
<div class="a" style="left:314.5px;top:905.3px;width:228.5px;height:31px;background:#e6eaee;border:1px solid #c9d0d8;border-radius:16px;box-shadow:0 1px 1.5px rgba(0,0,0,.12)"></div>
<svg class="a" style="left:324px;top:911px" width="20" height="20" viewBox="0 0 20 20" fill="none" stroke="#2a2a2a" stroke-width="2">
<circle cx="8.5" cy="8.5" r="5.8"/><path d="M12.8 12.8l4.5 4.5"/></svg>
<div class="t fit" style="left:352px;top:912.5px;font-size:14px;color:#6a6a6a;--w:29px;transform:scaleX(1.0357);">検索</div>
<svg class="a" style="left:489px;top:907px" width="52" height="29" viewBox="0 0 52 29">
<path d="M1 28C2 20 4 12 8 6Q12 2 20 2.5L30 1.5Q40 2 45 5C48 10 50 20 51 28Z" fill="#d3a468"/>
<path d="M5 28l3-15h36l3 15z" fill="#c08a4c"/>
<g fill="#e2bd86"><ellipse cx="13" cy="14" rx="3" ry="3.5"/><ellipse cx="21" cy="14" rx="3" ry="3.5"/><ellipse cx="31" cy="14" rx="3" ry="3.5"/><ellipse cx="39" cy="14" rx="3" ry="3.5"/>
<rect x="10" y="17" width="6" height="10"/><rect x="18" y="17" width="6" height="10"/><rect x="28" y="17" width="6" height="10"/><rect x="36" y="17" width="6" height="10"/></g>
<path d="M9 18v10M17 18v10M25 18v10M35 18v10M43 18v10" stroke="#7a5226" stroke-width="1.3"/><rect x="24.5" y="21" width="3.5" height="7" fill="#4a3018"/>
<path d="M6 8h40" stroke="#e8c896" stroke-width="1.2"/></svg>
<svg class="a" style="left:557px;top:909px" width="27" height="25" viewBox="0 0 27 25">
<rect x="8.5" y="0.5" width="17.5" height="17" fill="#f2f2f2" stroke="#dedede"/><rect x="0.5" y="7" width="18" height="17.5" fill="#2d2d2d"/><rect x="8.5" y="7" width="10" height="10.5" fill="#a8a8a8"/></svg>
<svg class="a" style="left:603px;top:908px" width="28" height="26" viewBox="0 0 28 26">
<path d="M0 3h10l3 3h15v19H0z" fill="#e3a21a"/><rect x="0" y="8" width="28" height="17" fill="#ffc73a"/><rect x="9" y="17" width="19" height="8" fill="#1a78d0"/></svg>
<svg class="a" style="left:649px;top:907px" width="28" height="28" viewBox="0 0 28 28">
<path d="M2 3L14 0 27 6 26 24 12 28 1 22z" fill="#21d789"/><path d="M20 2l7 8-3 14z" fill="#fcf84a"/><path d="M4 2l10 0-4 10z" fill="#07c3f2"/>
<rect x="5" y="5" width="18" height="18" fill="#111"/><text x="7" y="14.5" font-size="8.5" font-weight="bold" fill="#fff" font-family="Liberation Sans">PC</text><rect x="7" y="18" width="6" height="1.6" fill="#fff"/></svg>
<svg class="a" style="left:697px;top:903px" width="34" height="32" viewBox="0 0 34 32">
<circle cx="13" cy="18" r="13" fill="#db4437"/><path d="M13 18L24.3 11.5A13 13 0 0 1 13 31z" fill="#f4c20d"/><path d="M13 18L13 31A13 13 0 0 1 1.7 11.5z" fill="#0f9d58"/>
<circle cx="13" cy="18" r="6" fill="#fff"/><circle cx="13" cy="18" r="4.6" fill="#4285f4"/>
<circle cx="25" cy="8" r="8" fill="#3a8fd8"/><path d="M20.5 11l5-6 5 6z" fill="#fff"/></svg>
<svg class="a" style="left:743px;top:903px" width="34" height="32" viewBox="0 0 34 32">
<circle cx="13" cy="18" r="13" fill="#db4437"/><path d="M13 18L24.3 11.5A13 13 0 0 1 13 31z" fill="#f4c20d"/><path d="M13 18L13 31A13 13 0 0 1 1.7 11.5z" fill="#0f9d58"/>
<circle cx="13" cy="18" r="6" fill="#fff"/><circle cx="13" cy="18" r="4.6" fill="#4285f4"/>
<circle cx="25" cy="8" r="8" fill="#e8711c"/><text x="22" y="11.5" font-size="9" fill="#fff" font-family="Liberation Sans">k</text></svg>
<div class="a" style="left:782px;top:900.5px;width:40px;height:40.5px;background:#edf0f4;border:1px solid #d8dde4;border-radius:5px"></div>
<svg class="a" style="left:789px;top:909px" width="27" height="24" viewBox="0 0 27 24">
<rect x="7" y="0" width="19" height="24" rx="1.5" fill="#21a366"/><rect x="7" y="0" width="19" height="7" fill="#33c481"/><rect x="7" y="16" width="19" height="8" fill="#107c41"/>
<rect x="0" y="5" width="14" height="14" rx="1.5" fill="#107c41"/><path d="M3.5 8.5l7 7M10.5 8.5l-7 7" stroke="#fff" stroke-width="2"/></svg>
<div class="a" style="left:794px;top:937.5px;width:16px;height:3px;background:#2a6fd6;border-radius:2px"></div>
<svg class="a" style="left:837px;top:907px" width="24" height="26" viewBox="0 0 24 26">
<rect x="1" y="3" width="19" height="22" rx="2" fill="#8a9ab0"/><rect x="2.5" y="2" width="16" height="20" fill="#f2f2f2"/>
<path d="M5 8h10M5 11h10M5 14h8" stroke="#b0b8c4" stroke-width="1"/><path d="M12 18L21 2l2 1.5-8 16z" fill="#d8a24a"/><path d="M21 2l2 1.5 1-2-2-1.2z" fill="#d04040"/></svg>
<svg class="a" style="left:882px;top:910px" width="27" height="21" viewBox="0 0 27 21">
<rect x="0" y="0" width="27" height="21" rx="2" fill="#3a3a3a"/><rect x="0" y="0" width="27" height="3" fill="#555"/>
<path d="M4 7l5 3.5-5 3.5" stroke="#fff" stroke-width="1.8" fill="none"/><rect x="11" y="14" width="8" height="1.8" fill="#fff"/></svg>
<div class="a" style="left:613px;top:938px;width:6px;height:2.5px;background:#777;border-radius:2px"></div>
<div class="a" style="left:660px;top:938px;width:6px;height:2.5px;background:#777;border-radius:2px"></div>
<div class="a" style="left:706px;top:938px;width:6px;height:2.5px;background:#777;border-radius:2px"></div>
<div class="a" style="left:753px;top:938px;width:6px;height:2.5px;background:#777;border-radius:2px"></div>
<div class="a" style="left:845px;top:938px;width:6px;height:2.5px;background:#777;border-radius:2px"></div>
<div class="a" style="left:892px;top:938px;width:6px;height:2.5px;background:#777;border-radius:2px"></div>
<svg class="a" style="left:989px;top:914px" width="14" height="10" viewBox="0 0 14 10" fill="none" stroke="#333" stroke-width="1.4"><path d="M1.5 8l5.5-5.5 5.5 5.5"/></svg>
<svg class="a" style="left:1020px;top:913px" width="20" height="14" viewBox="0 0 20 14" fill="#e6e9ed" stroke="#444" stroke-width="1.3">
<path d="M5 12.5h10.5a3.5 3.5 0 0 0 .5-7 5 5 0 0 0-9.5-1A4 4 0 0 0 5 12.5z"/></svg>
<svg class="a" style="left:1054px;top:912px" width="20" height="20" viewBox="0 0 20 20">
<path d="M5 1l4 2.5-4 2.5-4-2.5zM13 1l4 2.5-4 2.5-4-2.5zM5 6l4 2.5-4 2.5-4-2.5zM13 6l4 2.5-4 2.5-4-2.5z" fill="#333"/>
<rect x="2" y="9" width="9" height="10" fill="#e02020"/><text x="4" y="17.5" font-size="8" font-weight="bold" fill="#fff" font-family="Liberation Sans">1</text></svg>
<svg class="a" style="left:1090px;top:911px" width="14" height="20" viewBox="0 0 14 20" fill="none" stroke="#2f6fd0" stroke-width="1.6">
<rect x="4" y="1" width="6" height="11" rx="3"/><path d="M1.5 9a5.5 5.5 0 0 0 11 0M7 14.5V19"/></svg>
<div class="t" style="left:1126px;top:912px;font-size:14px;color:#b8b8b8;">A</div>
<div class="a" style="left:1163px;top:913px;width:16px;height:16px;border-radius:8px;background:#2b72d0"></div>
<div class="a" style="left:1173px;top:921px;width:7px;height:7px;border-radius:4px;background:#e05a2a"></div>
<svg class="a" style="left:1202px;top:912px" width="19" height="16" viewBox="0 0 19 16" fill="none" stroke="#333" stroke-width="1.3">
<path d="M1.5 6a11 11 0 0 1 16 0M4.5 9a7 7 0 0 1 10 0M7 11.8a3.5 3.5 0 0 1 5 0"/><circle cx="9.5" cy="14" r="1" fill="#333"/></svg>
<svg class="a" style="left:1227px;top:911px" width="20" height="18" viewBox="0 0 20 18" fill="none" stroke="#333" stroke-width="1.3">
<path d="M2 6h3l4-4v14l-4-4H2z"/><path d="M12 6a4 4 0 0 1 0 6M14.5 3.5a7.5 7.5 0 0 1 0 11M17 1.5a10 10 0 0 1 0 15"/></svg>
<svg class="a" style="left:1252px;top:910px" width="20" height="18" viewBox="0 0 20 18" fill="none" stroke="#333" stroke-width="1.4">
<rect x="1.5" y="5" width="14" height="10" rx="1.5"/><path d="M17 8.5v3" stroke-width="2"/><rect x="3.5" y="7" width="9" height="6" fill="#333"/><path d="M5 1l2 3" /></svg>
<div class="t fit" style="left:1322px;top:906px;font-size:13px;color:#222;--w:31px;transform:scaleX(0.9525);">21:29</div>
<div class="t fit" style="left:1287.5px;top:922.5px;font-size:13px;color:#222;--w:64px;transform:scaleX(0.9983);">2024/07/11</div>
<svg class="a" style="left:1361px;top:912px" width="15" height="19" viewBox="0 0 15 19">
<path d="M7.5 1a5 5 0 0 1 5 5v5l2 3H.5l2-3V6a5 5 0 0 1 5-5z" fill="#0f4fab"/><circle cx="7.5" cy="16.5" r="2" fill="#0f4fab"/></svg>
<svg class="a" style="left:1392px;top:907px" width="30" height="28" viewBox="0 0 30 28">
<defs><linearGradient id="cp" x1="0" y1="0" x2="0" y2="1"><stop offset="0" stop-color="#2b8ae6"/><stop offset=".55" stop-color="#3fbf6a"/><stop offset="1" stop-color="#f0c030"/></linearGradient>
<linearGradient id="cq" x1="0" y1="0" x2="0" y2="1"><stop offset="0" stop-color="#2a5ad8"/><stop offset=".4" stop-color="#9a5ae0"/><stop offset="1" stop-color="#f060a8"/></linearGradient></defs>
<path d="M9 3.5h8.5L11 22H3.5z" fill="url(#cp)" stroke="url(#cp)" stroke-width="3.5" stroke-linejoin="round"/>
<path d="M17.5 3.5h2.5L26 9l-6 15h-8.5z" fill="url(#cq)" stroke="url(#cq)" stroke-width="3.5" stroke-linejoin="round"/>
<rect x="9" y="19.5" width="19.5" height="7.5" rx="1.8" fill="#f2be1a"/><text x="10.8" y="25.8" font-size="6.6" font-weight="bold" fill="#2a2410" font-family="Liberation Sans">PRE</text></svg>
<div class="a" style="left:560px;top:388.5px;width:320px;height:244.5px;background:#dadada;border-radius:8px;box-shadow:0 10px 28px rgba(0,0,0,.34),0 2px 7px rgba(0,0,0,.16),0 0 0 1px rgba(0,0,0,.08)"></div>
<div class="a" style="left:560px;top:388.5px;width:320px;height:48px;background:linear-gradient(180deg,#dde2e6 0%,#dcdfe2 45%,#dadada 100%);border-radius:8px 8px 0 0"></div>
<div class="t fit" style="left:569.3px;top:398.5px;font-size:12.5px;color:#1a1a1a;--w:61px;transform:scaleX(0.9758);">UserForm1</div>
<svg class="a" style="left:858px;top:398px" width="13" height="12" viewBox="0 0 13 12" fill="none" stroke="#222" stroke-width="1.2"><path d="M1 .8l11 10.6M12 .8l-11 10.6"/></svg>
<div class="a" style="left:602px;top:496px;width:126px;height:25.6px;background:#e0e0e0;border-right:2px solid #6e6e6e;border-bottom:2px solid #6e6e6e"></div>
<div class="t fit" style="left:653px;top:503.5px;font-size:12px;color:#333;--w:24px;transform:scaleX(1.0000);">確定</div>
<div class="a" style="left:602.5px;top:437.8px;width:133px;height:32px;background:#e6e6e6;border:2px solid #7c7c7c;border-right-color:#9a9a9a;border-bottom-color:#d0d0d0"></div>
<div class="a" style="left:717.3px;top:440px;width:16px;height:27.5px;background:#dcdcdc;border-right:1.5px solid #707070;border-bottom:1.5px solid #707070"></div>
<svg class="a" style="left:720.5px;top:451.5px" width="10" height="6" viewBox="0 0 10 6"><path d="M.5 0h9L5 5z" fill="#111"/></svg>
<div class="a" style="left:601.8px;top:471px;width:135px;height:40.5px;background:#e8e8e8;border:1.6px solid #2a2a2a"></div>
<div class="a" style="left:603.6px;top:472.6px;width:131.5px;height:12px;border:1px dotted #444"></div>
<div class="t" style="left:613px;top:473.3px;font-size:11.5px;color:#151515;">hoge</div>
<div class="t" style="left:613px;top:486.1px;font-size:11.5px;color:#151515;">fuga</div>
<div class="t" style="left:613px;top:498.9px;font-size:11.5px;color:#151515;">piyo</div>
<svg class="a" style="left:724px;top:458px" width="14" height="22" viewBox="0 0 14 22">
<path d="M1 1v16l4-3.5 3 6.5 2.5-1-3-6.3H12z" fill="#f4f4f4" stroke="#111" stroke-width="1"/></svg>
<div class="a" style="left:1443px;top:405px;width:477px;height:270px;background:#1c1c1c"></div>
<svg class="a" style="left:1616px;top:476px" width="130" height="130" viewBox="0 0 1080 1080">
<defs><clipPath id="cc"><circle cx="542" cy="530" r="490"/></clipPath></defs>
<circle cx="542" cy="530" r="490" fill="#2d8ac6"/>
<g clip-path="url(#cc)" fill="#e6e6e6">
<path d="M545 272L270 738H815z"/>
<path d="M568 268L838 518V730z"/>
<g stroke="#e6e6e6" stroke-width="17" fill="none">
<path d="M40 272H545"/><path d="M40 292L500 352"/><path d="M40 318L455 428"/><path d="M40 350L410 503"/><path d="M40 388L365 578"/><path d="M40 432L320 653"/><path d="M40 478L275 730"/>
</g></g>
<circle cx="200" cy="865" r="42" fill="#e6e6e6"/><path d="M165 840A42 42 0 0 0 215 905" stroke="#b03020" stroke-width="12" fill="none"/>
</svg>
<div class="t fit" style="left:1455.5px;top:647px;font-size:19px;color:#e4e4e4;--w:71.5px;transform:scaleX(0.9408);">小川慶一</div></div><div style="position:absolute;left:0;top:0;width:1920px;height:1080px;filter:blur(0.8px);opacity:0.45"><div class="a" style="left:0;top:0;width:1440px;height:1080px;background:#1b1b1b"></div>
<div class="a" style="left:0;top:134px;width:1440px;height:83px;background:#555555"></div>
<div class="a" style="left:0;top:216px;width:1440px;height:2px;background:#444444"></div>
<div class="a" style="left:0;top:218px;width:1440px;height:46px;background:#4f4f4f"></div>
<div class="a" style="left:0;top:264px;width:1440px;height:26px;background:#525252"></div>
<svg class="a" style="left:16px;top:150px" width="19" height="18" viewBox="0 0 19 18">
<rect x="5" y="0.5" width="13" height="17" rx="1" fill="#21a366"/>
<rect x="5" y="0.5" width="13" height="5" fill="#33c481"/>
<rect x="5" y="11.5" width="13" height="6" fill="#107c41"/>
<rect x="0.5" y="4" width="10.5" height="10.5" rx="1.5" fill="#0e6a34"/>
<path d="M3.2 6.6 L8.3 12 M8.3 6.6 L3.2 12" stroke="#e8e8e8" stroke-width="1.5"/>
</svg>
<div class="t fit" style="left:51px;top:151.5px;font-size:13.2px;color:#a8a8a8;text-shadow:0.3px 0 0 #a8a8a8;--w:51px;transform:scaleX(0.9808);">自動保存</div>
<div class="a" style="left:109px;top:148px;width:48px;height:21px;border:1.3px solid #8a8a8a;border-radius:11px"></div>
<div class="a" style="left:112.5px;top:151.5px;width:14px;height:14px;border-radius:7px;background:#999"></div>
<div class="t fit" style="left:133px;top:152.5px;font-size:12.5px;color:#8f8f8f;--w:19px;transform:scaleX(0.7308);">オフ</div>
<svg class="a" style="left:170px;top:150px" width="19" height="19" viewBox="0 0 19 19" fill="none" stroke="#9a9a9a" stroke-width="1.2">
<path d="M1.5 1.5h15v15.5h-15z"/><path d="M4.8 1.5v5.3h8.6V1.5"/><path d="M4.8 17v-5.2h8.6V17"/></svg>
<svg class="a" style="left:200px;top:150px" width="34" height="19" viewBox="0 0 34 19" fill="none" stroke="#6a6a6a" stroke-width="1.2">
<path d="M2.5 2v4.5H7"/><path d="M3 6C5.5 2 13 1.5 15 6.5c1.5 4-3 8.5-5.5 11"/><path d="M25 7.5l2.5 2.5 2.5-2.5"/></svg>
<svg class="a" style="left:242px;top:150px" width="34" height="19" viewBox="0 0 34 19" fill="none" stroke="#9a9a9a" stroke-width="1.3">
<path d="M16 1v5h-5"/><path d="M15.5 5.5C13 1.5 5 1 2.5 7c-1.2 3 1.5 7 4.8 10.8"/><path d="M23.5 8l2.5 2.5 2.5-2.5"/></svg>
<svg class="a" style="left:286px;top:154px" width="11" height="10" viewBox="0 0 11 10" fill="none" stroke="#9a9a9a" stroke-width="1.2">
<path d="M1 1.5h9"/><path d="M2 4.5l3.5 3 3.5-3"/></svg>
<div class="t fit" style="left:322px;top:151px;font-size:14px;color:#a0a0a0;--w:79px;transform:scaleX(1.0155);">sample.xlsm</div>
<svg class="a" style="left:404px;top:155px" width="12" height="9" viewBox="0 0 12 9" fill="none" stroke="#a0a0a0" stroke-width="1.3">
<path d="M1.5 2l4.5 4.5 4.5-4.5"/></svg>
<div class="a" style="left:535px;top:143px;width:387px;height:33px;background:#797979;border-radius:4px;box-shadow:0 1px 1.5px rgba(0,0,0,.25)"></div>
<svg class="a" style="left:556px;top:150px" width="20" height="19" viewBox="0 0 20 19" fill="none" stroke="#5a5a5a" stroke-width="1.4">
<circle cx="10" cy="7" r="5.3"/><path d="M6.3 11L2 16.5"/></svg>
<div class="t fit" style="left:587px;top:152.5px;font-size:13px;color:#5c5c5c;--w:27px;transform:scaleX(1.0385);">検索</div>
<div class="t fit" style="left:1137px;top:152.5px;font-size:13px;color:#9a9a9a;text-shadow:0.35px 0 0 #9a9a9a;--w:55px;transform:scaleX(0.9888);">慶一 小川</div>
<div class="a" style="left:1201px;top:146px;width:26.5px;height:26.5px;border-radius:14px;background:#cacaca"></div>
<svg class="a" style="left:1201px;top:146px" width="26" height="26" viewBox="0 0 26 26" fill="none" stroke="#4a4a4a" stroke-width="1.3">
<circle cx="13" cy="9.8" r="4.3"/><path d="M6.2 20.5c1-4.2 3.6-5.8 6.8-5.8s5.8 1.6 6.8 5.8"/></svg>
<svg class="a" style="left:1255px;top:150px" width="16" height="19" viewBox="0 0 18 20" fill="none" stroke="#a5a5a5" stroke-width="1.3">
<path d="M2 7.5a6 6 0 1 1 12 0c0 2.8-2.2 4.2-2.6 7H4.6C4.2 11.7 2 10.3 2 7.5z"/><path d="M5 16.5h6M5.8 18.8h4.4"/></svg>
<div class="a" style="left:1268px;top:146.5px;width:8px;height:8px;border-radius:4px;background:#e5473b"></div>
<div class="a" style="left:1308px;top:158.5px;width:11px;height:1.3px;background:#999"></div>
<svg class="a" style="left:1357px;top:152.5px" width="15" height="14" viewBox="0 0 15 14" fill="none" stroke="#9a9a9a" stroke-width="1.2">
<rect x="2" y="4" width="8.5" height="8.5" rx="1.5"/><path d="M5 1.8h5.5a2.5 2.5 0 0 1 2.5 2.5v5.5"/></svg>
<svg class="a" style="left:1408px;top:153px" width="13" height="13" viewBox="0 0 13 13" fill="none" stroke="#a5a5a5" stroke-width="1.2">
<path d="M1 1l11 11M12 1L1 12"/></svg>
<div class="t fit" style="left:11.8px;top:193.5px;font-size:14px;color:#e4e4e4;text-shadow:0.4px 0 0 #e4e4e4;--w:40.2px;transform:scaleX(0.7179);">ファイル</div>
<div class="t fit" style="left:69.4px;top:193.5px;font-size:14px;color:#e4e4e4;text-shadow:0.4px 0 0 #e4e4e4;--w:36.6px;transform:scaleX(0.8714);">ホーム</div>
<div class="t fit" style="left:124.2px;top:193.5px;font-size:14px;color:#e4e4e4;text-shadow:0.4px 0 0 #e4e4e4;--w:28.7px;transform:scaleX(1.0250);">挿入</div>
<div class="t fit" style="left:173.8px;top:193.5px;font-size:14px;color:#e4e4e4;text-shadow:0.4px 0 0 #e4e4e4;--w:91.5px;transform:scaleX(0.8170);">ページレイアウト</div>
<div class="t fit" style="left:286.29999999999995px;top:193.5px;font-size:14px;color:#e4e4e4;text-shadow:0.4px 0 0 #e4e4e4;--w:29.5px;transform:scaleX(1.0536);">数式</div>
<div class="t fit" style="left:333.9px;top:193.5px;font-size:14px;color:#e4e4e4;text-shadow:0.4px 0 0 #e4e4e4;--w:35.5px;transform:scaleX(0.8452);">データ</div>
<div class="t fit" style="left:387.4px;top:193.5px;font-size:14px;color:#e4e4e4;text-shadow:0.4px 0 0 #e4e4e4;--w:29.5px;transform:scaleX(1.0536);">校閲</div>
<div class="t fit" style="left:435.7px;top:193.5px;font-size:14px;color:#e4e4e4;text-shadow:0.4px 0 0 #e4e4e4;--w:28.7px;transform:scaleX(1.0250);">表示</div>
<div class="t fit" style="left:483.2px;top:193.5px;font-size:14px;color:#e4e4e4;text-shadow:0.4px 0 0 #e4e4e4;--w:28.7px;transform:scaleX(1.0250);">開発</div>
<div class="t fit" style="left:530.6999999999999px;top:193.5px;font-size:14px;color:#e4e4e4;text-shadow:0.4px 0 0 #e4e4e4;--w:34.9px;transform:scaleX(0.8310);">ヘルプ</div>
<div class="t fit" style="left:589.5px;top:194.5px;font-size:14px;color:#e0e0e0;--w:79px;transform:scaleX(1.0575);">Power Pivot</div>
<div class="a" style="left:1283px;top:188.8px;width:68px;height:23.8px;background:#bdbdbd;border-radius:3px"></div>
<svg class="a" style="left:1288px;top:194.5px" width="13" height="13" viewBox="0 0 13 13" fill="none" stroke="#333" stroke-width="1.2">
<path d="M1 1h10.5v7H4.5l-2.8 2.6V8H1z"/></svg>
<div class="t fit" style="left:1304px;top:193px;font-size:13px;color:#333;text-shadow:0.35px 0 0 #333;--w:40.5px;transform:scaleX(0.7788);">コメント</div>
<div class="a" style="left:1360px;top:188px;width:67px;height:25px;background:#55aa77;border-radius:3px"></div>
<svg class="a" style="left:1364px;top:192px" width="16" height="17" viewBox="0 0 16 17" fill="none" stroke="#1b3524" stroke-width="1.2">
<path d="M1.5 7.5v7.5h11v-3"/><path d="M5 12c0-4.2 3-6.5 7-6.5"/><path d="M10 2.5l3 3-3 3"/></svg>
<div class="t fit" style="left:1382px;top:194px;font-size:13.5px;color:#1b3524;text-shadow:0.35px 0 0 #1b3524;--w:27px;transform:scaleX(0.9643);">共有</div>
<svg class="a" style="left:1414px;top:197px" width="10" height="7" viewBox="0 0 10 7" fill="none" stroke="#1b3524" stroke-width="1.3">
<path d="M2 2l3 3 3-3"/></svg>
<div class="a" style="left:8.5px;top:225.2px;width:107.5px;height:32.5px;border:1.2px solid #828282;border-radius:5px"></div>
<div class="t fit" style="left:16px;top:236px;font-size:16px;color:#e6e6e6;--w:27px;transform:scaleX(0.9584);">C11</div>
<svg class="a" style="left:98px;top:238px" width="14" height="10" viewBox="0 0 14 10" fill="none" stroke="#d4d4d4" stroke-width="1.4">
<path d="M1.5 2.5l5.5 5.5 5.5-5.5"/></svg>
<div class="a" style="left:125.2px;top:236.3px;width:2.6px;height:2.6px;background:#d8d8d8"></div>
<div class="a" style="left:125.2px;top:240.7px;width:2.6px;height:2.6px;background:#d8d8d8"></div>
<div class="a" style="left:125.2px;top:244.9px;width:2.6px;height:2.6px;background:#d8d8d8"></div>
<div class="a" style="left:137px;top:225.3px;width:90.8px;height:32.2px;border:1.2px solid #828282;border-radius:5px"></div>
<svg class="a" style="left:137px;top:225px" width="92" height="33" viewBox="0 0 92 33" fill="none" stroke-width="1.1">
<path d="M7.5 10l12.5 12.5M20 10L7.5 22.5" stroke="#8a8a8a"/><path d="M31 16.5l5.3 5.3L47.5 10.3" stroke="#8a8a8a"/><path d="M77.5 14.5l5.4 5.4 5.4-5.4" stroke="#b8b8b8" stroke-width="1.2"/></svg>
<div class="t fit" style="left:192.5px;top:231px;font-size:19px;color:#c8c8c8;font-style:italic;font-family:'Liberation Serif',serif;--w:17.5px;transform:scaleX(1.2756);">fx</div>
<div class="a" style="left:232px;top:225.2px;width:1199.5px;height:32.5px;border:1.2px solid #828282;border-radius:5px"></div>
<div class="t fit" style="left:246px;top:234px;font-size:14.5px;color:#d6d6d6;--w:125px;transform:scaleX(1.0504);">有限会社ＮＯＰＱ</div>
<svg class="a" style="left:1413px;top:236px" width="16" height="10" viewBox="0 0 16 10" fill="none" stroke="#d4d4d4" stroke-width="1.4">
<path d="M2 2l6 6 6-6"/></svg>
<div class="a" style="left:35.5px;top:290px;width:1381.8px;height:547.5px;background:#e5e5e5"></div>
<div class="a" style="left:0;top:290px;width:35.5px;height:547.5px;background:#444444"></div>
<div class="a" style="left:35.5px;top:315.92px;width:1381.8px;height:1px;background:#d0d0d0"></div>
<div class="a" style="left:0;top:315.82px;width:35.5px;height:1.3px;background:#6c6c6c"></div>
<div class="a" style="left:35.5px;top:342.34px;width:1381.8px;height:1px;background:#d0d0d0"></div>
<div class="a" style="left:0;top:342.24px;width:35.5px;height:1.3px;background:#6c6c6c"></div>
<div class="a" style="left:35.5px;top:368.76px;width:1381.8px;height:1px;background:#d0d0d0"></div>
<div class="a" style="left:0;top:368.66px;width:35.5px;height:1.3px;background:#6c6c6c"></div>
<div class="a" style="left:35.5px;top:395.18px;width:1381.8px;height:1px;background:#d0d0d0"></div>
<div class="a" style="left:0;top:395.08px;width:35.5px;height:1.3px;background:#6c6c6c"></div>
<div class="a" style="left:35.5px;top:421.60px;width:1381.8px;height:1px;background:#d0d0d0"></div>
<div class="a" style="left:0;top:421.50px;width:35.5px;height:1.3px;background:#6c6c6c"></div>
<div class="a" style="left:35.5px;top:448.02px;width:1381.8px;height:1px;background:#d0d0d0"></div>
<div class="a" style="left:0;top:447.92px;width:35.5px;height:1.3px;background:#6c6c6c"></div>
<div class="a" style="left:35.5px;top:474.44px;width:1381.8px;height:1px;background:#d0d0d0"></div>
<div class="a" style="left:0;top:474.34px;width:35.5px;height:1.3px;background:#6c6c6c"></div>
<div class="a" style="left:35.5px;top:500.86px;width:1381.8px;height:1px;background:#d0d0d0"></div>
<div class="a" style="left:0;top:500.76px;width:35.5px;height:1.3px;background:#6c6c6c"></div>
<div class="a" style="left:35.5px;top:527.28px;width:1381.8px;height:1px;background:#d0d0d0"></div>
<div class="a" style="left:0;top:527.18px;width:35.5px;height:1.3px;background:#6c6c6c"></div>
<div class="a" style="left:35.5px;top:553.70px;width:1381.8px;height:1px;background:#d0d0d0"></div>
<div class="a" style="left:0;top:553.60px;width:35.5px;height:1.3px;background:#6c6c6c"></div>
<div class="a" style="left:35.5px;top:580.12px;width:1381.8px;height:1px;background:#d0d0d0"></div>
<div class="a" style="left:0;top:580.02px;width:35.5px;height:1.3px;background:#6c6c6c"></div>
<div class="a" style="left:35.5px;top:606.54px;width:1381.8px;height:1px;background:#d0d0d0"></div>
<div class="a" style="left:0;top:606.44px;width:35.5px;height:1.3px;background:#6c6c6c"></div>
<div class="a" style="left:35.5px;top:632.96px;width:1381.8px;height:1px;background:#d0d0d0"></div>
<div class="a" style="left:0;top:632.86px;width:35.5px;height:1.3px;background:#6c6c6c"></div>
<div class="a" style="left:35.5px;top:659.38px;width:1381.8px;height:1px;background:#d0d0d0"></div>
<div class="a" style="left:0;top:659.28px;width:35.5px;height:1.3px;background:#6c6c6c"></div>
<div class="a" style="left:35.5px;top:685.80px;width:1381.8px;height:1px;background:#d0d0d0"></div>
<div class="a" style="left:0;top:685.70px;width:35.5px;height:1.3px;background:#6c6c6c"></div>
<div class="a" style="left:35.5px;top:712.22px;width:1381.8px;height:1px;background:#d0d0d0"></div>
<div class="a" style="left:0;top:712.12px;width:35.5px;height:1.3px;background:#6c6c6c"></div>
<div class="a" style="left:35.5px;top:738.64px;width:1381.8px;height:1px;background:#d0d0d0"></div>
<div class="a" style="left:0;top:738.54px;width:35.5px;height:1.3px;background:#6c6c6c"></div>
<div class="a" style="left:35.5px;top:765.06px;width:1381.8px;height:1px;background:#d0d0d0"></div>
<div class="a" style="left:0;top:764.96px;width:35.5px;height:1.3px;background:#6c6c6c"></div>
<div class="a" style="left:35.5px;top:791.48px;width:1381.8px;height:1px;background:#d0d0d0"></div>
<div class="a" style="left:0;top:791.38px;width:35.5px;height:1.3px;background:#6c6c6c"></div>
<div class="a" style="left:35.5px;top:817.90px;width:1381.8px;height:1px;background:#d0d0d0"></div>
<div class="a" style="left:0;top:817.80px;width:35.5px;height:1.3px;background:#6c6c6c"></div>
<div class="a" style="left:64.20px;top:290px;width:1px;height:547.5px;background:#d0d0d0"></div>
<div class="a" style="left:34.90px;top:265.5px;width:1.2px;height:24.5px;background:#888"></div>
<div class="a" style="left:244.50px;top:290px;width:1px;height:547.5px;background:#d0d0d0"></div>
<div class="a" style="left:64.10px;top:265.5px;width:1.2px;height:24.5px;background:#888"></div>
<div class="a" style="left:359.50px;top:290px;width:1px;height:547.5px;background:#d0d0d0"></div>
<div class="a" style="left:244.40px;top:265.5px;width:1.2px;height:24.5px;background:#888"></div>
<div class="a" style="left:602.00px;top:290px;width:1px;height:547.5px;background:#d0d0d0"></div>
<div class="a" style="left:359.40px;top:265.5px;width:1.2px;height:24.5px;background:#888"></div>
<div class="a" style="left:677.80px;top:290px;width:1px;height:547.5px;background:#d0d0d0"></div>
<div class="a" style="left:601.90px;top:265.5px;width:1.2px;height:24.5px;background:#888"></div>
<div class="a" style="left:753.70px;top:290px;width:1px;height:547.5px;background:#d0d0d0"></div>
<div class="a" style="left:677.70px;top:265.5px;width:1.2px;height:24.5px;background:#888"></div>
<div class="a" style="left:829.70px;top:290px;width:1px;height:547.5px;background:#d0d0d0"></div>
<div class="a" style="left:753.60px;top:265.5px;width:1.2px;height:24.5px;background:#888"></div>
<div class="a" style="left:905.50px;top:290px;width:1px;height:547.5px;background:#d0d0d0"></div>
<div class="a" style="left:829.60px;top:265.5px;width:1.2px;height:24.5px;background:#888"></div>
<div class="a" style="left:981.50px;top:290px;width:1px;height:547.5px;background:#d0d0d0"></div>
<div class="a" style="left:905.40px;top:265.5px;width:1.2px;height:24.5px;background:#888"></div>
<div class="a" style="left:1057.50px;top:290px;width:1px;height:547.5px;background:#d0d0d0"></div>
<div class="a" style="left:981.40px;top:265.5px;width:1.2px;height:24.5px;background:#888"></div>
<div class="a" style="left:1133.30px;top:290px;width:1px;height:547.5px;background:#d0d0d0"></div>
<div class="a" style="left:1057.40px;top:265.5px;width:1.2px;height:24.5px;background:#888"></div>
<div class="a" style="left:1209.00px;top:290px;width:1px;height:547.5px;background:#d0d0d0"></div>
<div class="a" style="left:1133.20px;top:265.5px;width:1.2px;height:24.5px;background:#888"></div>
<div class="a" style="left:1285.00px;top:290px;width:1px;height:547.5px;background:#d0d0d0"></div>
<div class="a" style="left:1208.90px;top:265.5px;width:1.2px;height:24.5px;background:#888"></div>
<div class="a" style="left:1361.00px;top:290px;width:1px;height:547.5px;background:#d0d0d0"></div>
<div class="a" style="left:1284.90px;top:265.5px;width:1.2px;height:24.5px;background:#888"></div>
<div class="a" style="left:1360.90px;top:265.5px;width:1.2px;height:24.5px;background:#888"></div>
<div class="a" style="left:245px;top:264.5px;width:115px;height:25.5px;background:#5f5f5f"></div>
<div class="a" style="left:245px;top:288px;width:115px;height:2px;background:#2e8b55"></div>
<div class="a" style="left:244.4px;top:265.5px;width:1.2px;height:24.5px;background:#8a8a8a"></div>
<div class="a" style="left:359.4px;top:265.5px;width:1.2px;height:24.5px;background:#8a8a8a"></div>
<div class="t" style="left:30.1px;width:40px;text-align:center;top:266.7px;font-size:13.4px;color:#dcdcdc">A</div>
<div class="t" style="left:134.8px;width:40px;text-align:center;top:266.7px;font-size:13.4px;color:#dcdcdc">B</div>
<div class="t" style="left:282.5px;width:40px;text-align:center;top:266.7px;font-size:13.4px;color:#dcdcdc">C</div>
<div class="t" style="left:461.2px;width:40px;text-align:center;top:266.7px;font-size:13.4px;color:#dcdcdc">D</div>
<div class="t" style="left:620.4px;width:40px;text-align:center;top:266.7px;font-size:13.4px;color:#dcdcdc">E</div>
<div class="t" style="left:696.2px;width:40px;text-align:center;top:266.7px;font-size:13.4px;color:#dcdcdc">F</div>
<div class="t" style="left:772.2px;width:40px;text-align:center;top:266.7px;font-size:13.4px;color:#dcdcdc">G</div>
<div class="t" style="left:848.1px;width:40px;text-align:center;top:266.7px;font-size:13.4px;color:#dcdcdc">H</div>
<div class="t" style="left:924.0px;width:40px;text-align:center;top:266.7px;font-size:13.4px;color:#dcdcdc">I</div>
<div class="t" style="left:1000.0px;width:40px;text-align:center;top:266.7px;font-size:13.4px;color:#dcdcdc">J</div>
<div class="t" style="left:1075.9px;width:40px;text-align:center;top:266.7px;font-size:13.4px;color:#dcdcdc">K</div>
<div class="t" style="left:1151.7px;width:40px;text-align:center;top:266.7px;font-size:13.4px;color:#dcdcdc">L</div>
<div class="t" style="left:1227.5px;width:40px;text-align:center;top:266.7px;font-size:13.4px;color:#dcdcdc">M</div>
<div class="t" style="left:1303.5px;width:40px;text-align:center;top:266.7px;font-size:13.4px;color:#dcdcdc">N</div>
<div class="t" style="left:1379.0px;width:40px;text-align:center;top:266.7px;font-size:13.4px;color:#dcdcdc">O</div>
<svg class="a" style="left:14px;top:268px" width="20" height="20" viewBox="0 0 20 20"><path d="M1.5 18.5L17.5 3v15.5z" fill="#d8d8d8"/></svg>
<div class="a" style="left:0;top:554.20px;width:35.5px;height:26.42px;background:#595959"></div>
<div class="a" style="left:33.5px;top:554.20px;width:2px;height:26.42px;background:#2e8b55"></div>
<div class="t" style="left:0;width:35px;text-align:center;top:296.00px;font-size:14.5px;color:#d8d8d8;text-shadow:0.3px 0 0 #d8d8d8">1</div>
<div class="t" style="left:0;width:35px;text-align:center;top:322.42px;font-size:14.5px;color:#d8d8d8;text-shadow:0.3px 0 0 #d8d8d8">2</div>
<div class="t" style="left:0;width:35px;text-align:center;top:348.84px;font-size:14.5px;color:#d8d8d8;text-shadow:0.3px 0 0 #d8d8d8">3</div>
<div class="t" style="left:0;width:35px;text-align:center;top:375.26px;font-size:14.5px;color:#d8d8d8;text-shadow:0.3px 0 0 #d8d8d8">4</div>
<div class="t" style="left:0;width:35px;text-align:center;top:401.68px;font-size:14.5px;color:#d8d8d8;text-shadow:0.3px 0 0 #d8d8d8">5</div>
<div class="t" style="left:0;width:35px;text-align:center;top:428.10px;font-size:14.5px;color:#d8d8d8;text-shadow:0.3px 0 0 #d8d8d8">6</div>
<div class="t" style="left:0;width:35px;text-align:center;top:454.52px;font-size:14.5px;color:#d8d8d8;text-shadow:0.3px 0 0 #d8d8d8">7</div>
<div class="t" style="left:0;width:35px;text-align:center;top:480.94px;font-size:14.5px;color:#d8d8d8;text-shadow:0.3px 0 0 #d8d8d8">8</div>
<div class="t" style="left:0;width:35px;text-align:center;top:507.36px;font-size:14.5px;color:#d8d8d8;text-shadow:0.3px 0 0 #d8d8d8">9</div>
<div class="t" style="left:0;width:35px;text-align:center;top:533.78px;font-size:14.5px;color:#d8d8d8;text-shadow:0.3px 0 0 #d8d8d8">10</div>
<div class="t" style="left:0;width:35px;text-align:center;top:560.20px;font-size:14.5px;color:#d8d8d8;text-shadow:0.3px 0 0 #d8d8d8">11</div>
<div class="t" style="left:0;width:35px;text-align:center;top:586.62px;font-size:14.5px;color:#d8d8d8;text-shadow:0.3px 0 0 #d8d8d8">12</div>
<div class="t" style="left:0;width:35px;text-align:center;top:613.04px;font-size:14.5px;color:#d8d8d8;text-shadow:0.3px 0 0 #d8d8d8">13</div>
<div class="t" style="left:0;width:35px;text-align:center;top:639.46px;font-size:14.5px;color:#d8d8d8;text-shadow:0.3px 0 0 #d8d8d8">14</div>
<div class="t" style="left:0;width:35px;text-align:center;top:665.88px;font-size:14.5px;color:#d8d8d8;text-shadow:0.3px 0 0 #d8d8d8">15</div>
<div class="t" style="left:0;width:35px;text-align:center;top:692.30px;font-size:14.5px;color:#d8d8d8;text-shadow:0.3px 0 0 #d8d8d8">16</div>
<div class="t" style="left:0;width:35px;text-align:center;top:718.72px;font-size:14.5px;color:#d8d8d8;text-shadow:0.3px 0 0 #d8d8d8">17</div>
<div class="t" style="left:0;width:35px;text-align:center;top:745.14px;font-size:14.5px;color:#d8d8d8;text-shadow:0.3px 0 0 #d8d8d8">18</div>
<div class="t" style="left:0;width:35px;text-align:center;top:771.56px;font-size:14.5px;color:#d8d8d8;text-shadow:0.3px 0 0 #d8d8d8">19</div>
<div class="t" style="left:0;width:35px;text-align:center;top:797.98px;font-size:14.5px;color:#d8d8d8;text-shadow:0.3px 0 0 #d8d8d8">20</div>
<div class="t" style="left:0;width:35px;text-align:center;top:824.40px;font-size:14.5px;color:#d8d8d8;text-shadow:0.3px 0 0 #d8d8d8">21</div>
<div class="a" style="left:0;top:0;width:1417.3px;height:837.5px;overflow:hidden">
<div class="t fit" style="left:38px;top:295.3px;font-size:15px;color:#383838;--w:12.5px;transform:scaleX(1.0695);">id</div>
<div class="t fit" style="left:68.5px;top:295.5px;font-size:15px;color:#383838;--w:47px;transform:scaleX(1.0444);">会社名</div>
<div class="t fit" style="left:248px;top:295.5px;font-size:15px;color:#383838;--w:63px;transform:scaleX(1.0500);">電話番号</div>
<div class="t fit" style="left:363.5px;top:295.5px;font-size:15px;color:#383838;--w:31.5px;transform:scaleX(1.0500);">住所</div>
<div class="t fit" style="left:53.85px;top:320.82px;font-size:16.5px;color:#383838;--w:8.15px;transform:scaleX(0.8871);">1</div>
<div class="t fit" style="left:68.5px;top:321.92px;font-size:15px;color:#383838;--w:107.45px;transform:scaleX(1.0233);">株式会社<span class="fw">A</span><span class="fw">B</span><span class="fw">C</span></div>
<div class="t fit" style="left:248px;top:320.82px;font-size:16.5px;color:#383838;--w:99.5px;transform:scaleX(0.9682);">03-1234-5678</div>
<div class="t fit" style="left:363.5px;top:321.92px;font-size:15px;color:#383838;--w:181.08px;transform:scaleX(1.0435);">東京都新宿区西新宿<span class="d">1-1-1</span></div>
<div class="t fit" style="left:53.85px;top:347.24px;font-size:16.5px;color:#383838;--w:8.15px;transform:scaleX(0.8871);">2</div>
<div class="t fit" style="left:68.5px;top:348.34px;font-size:15px;color:#383838;--w:107.45px;transform:scaleX(1.0233);">有限会社<span class="fw">X</span><span class="fw">Y</span><span class="fw">Z</span></div>
<div class="t fit" style="left:248px;top:347.24px;font-size:16.5px;color:#383838;--w:99.5px;transform:scaleX(0.9682);">06-9876-5432</div>
<div class="t fit" style="left:363.5px;top:348.34px;font-size:15px;color:#383838;--w:196.7px;transform:scaleX(1.0433);">大阪府大阪市北区梅田<span class="d">2-2-2</span></div>
<div class="t fit" style="left:53.85px;top:373.66px;font-size:16.5px;color:#383838;--w:8.15px;transform:scaleX(0.8871);">3</div>
<div class="t fit" style="left:68.5px;top:374.76px;font-size:15px;color:#383838;--w:122.8px;transform:scaleX(1.0233);">株式会社<span class="fw">P</span><span class="fw">Q</span><span class="fw">R</span><span class="fw">S</span></div>
<div class="t fit" style="left:248px;top:373.66px;font-size:16.5px;color:#383838;--w:99.5px;transform:scaleX(0.9919);">052-111-2222</div>
<div class="t fit" style="left:363.5px;top:374.76px;font-size:15px;color:#383838;--w:196.7px;transform:scaleX(1.0433);">愛知県名古屋市中区栄<span class="d">3-3-3</span></div>
<div class="t fit" style="left:53.85px;top:400.08px;font-size:16.5px;color:#383838;--w:8.15px;transform:scaleX(0.8871);">4</div>
<div class="t fit" style="left:68.5px;top:401.18px;font-size:15px;color:#383838;--w:122.8px;transform:scaleX(1.0233);">合同会社<span class="fw">L</span><span class="fw">M</span><span class="fw">N</span><span class="fw">O</span></div>
<div class="t fit" style="left:248px;top:400.08px;font-size:16.5px;color:#383838;--w:99.5px;transform:scaleX(0.9800);">011-333-4444</div>
<div class="t fit" style="left:363.5px;top:401.18px;font-size:15px;color:#383838;--w:212.32px;transform:scaleX(1.0432);">北海道札幌市中央区大通<span class="d">4-4-4</span></div>
<div class="t fit" style="left:53.85px;top:426.5px;font-size:16.5px;color:#383838;--w:8.15px;transform:scaleX(0.8871);">5</div>
<div class="t fit" style="left:68.5px;top:427.6px;font-size:15px;color:#383838;--w:122.8px;transform:scaleX(1.0233);">株式会社<span class="fw">E</span><span class="fw">F</span><span class="fw">G</span><span class="fw">H</span></div>
<div class="t fit" style="left:248px;top:426.5px;font-size:16.5px;color:#383838;--w:99.5px;transform:scaleX(0.9682);">092-555-6666</div>
<div class="t fit" style="left:363.5px;top:427.6px;font-size:15px;color:#383838;--w:181.08px;transform:scaleX(1.0435);">福岡県福岡市博多区<span class="d">5-5-5</span></div>
<div class="t fit" style="left:53.85px;top:452.92px;font-size:16.5px;color:#383838;--w:8.15px;transform:scaleX(0.8871);">6</div>
<div class="t fit" style="left:68.5px;top:454.02px;font-size:15px;color:#383838;--w:122.8px;transform:scaleX(1.0233);">株式会社<span class="fw">I</span><span class="fw">J</span><span class="fw">K</span><span class="fw">L</span></div>
<div class="t fit" style="left:248px;top:452.92px;font-size:16.5px;color:#383838;--w:99.5px;transform:scaleX(0.9682);">022-777-8888</div>
<div class="t fit" style="left:363.5px;top:454.02px;font-size:15px;color:#383838;--w:181.08px;transform:scaleX(1.0435);">宮城県仙台市青葉区<span class="d">6-6-6</span></div>
<div class="t fit" style="left:53.85px;top:479.34px;font-size:16.5px;color:#383838;--w:8.15px;transform:scaleX(0.8871);">7</div>
<div class="t fit" style="left:68.5px;top:480.44px;font-size:15px;color:#383838;--w:122.8px;transform:scaleX(1.0233);">有限会社<span class="fw">V</span><span class="fw">W</span><span class="fw">X</span><span class="fw">Y</span></div>
<div class="t fit" style="left:248px;top:479.34px;font-size:16.5px;color:#383838;--w:99.5px;transform:scaleX(0.9682);">045-999-0000</div>
<div class="t fit" style="left:363.5px;top:480.44px;font-size:15px;color:#383838;--w:181.08px;transform:scaleX(1.0435);">神奈川県横浜市西区<span class="d">7-7-7</span></div>
<div class="t fit" style="left:53.85px;top:505.76px;font-size:16.5px;color:#383838;--w:8.15px;transform:scaleX(0.8871);">8</div>
<div class="t fit" style="left:68.5px;top:506.86px;font-size:15px;color:#383838;--w:122.8px;transform:scaleX(1.0233);">合資会社<span class="fw">D</span><span class="fw">E</span><span class="fw">F</span><span class="fw">G</span></div>
<div class="t fit" style="left:248px;top:505.76px;font-size:16.5px;color:#383838;--w:99.5px;transform:scaleX(0.9682);">076-123-4567</div>
<div class="t fit" style="left:363.5px;top:506.86px;font-size:15px;color:#383838;--w:134.22px;transform:scaleX(1.0443);">富山県富山市<span class="d">8-8-8</span></div>
<div class="t fit" style="left:53.85px;top:532.18px;font-size:16.5px;color:#383838;--w:8.15px;transform:scaleX(0.8871);">9</div>
<div class="t fit" style="left:68.5px;top:533.28px;font-size:15px;color:#383838;--w:122.8px;transform:scaleX(1.0233);">株式会社<span class="fw">H</span><span class="fw">I</span><span class="fw">J</span><span class="fw">K</span></div>
<div class="t fit" style="left:248px;top:532.18px;font-size:16.5px;color:#383838;--w:99.5px;transform:scaleX(0.9682);">086-890-1234</div>
<div class="t fit" style="left:363.5px;top:533.28px;font-size:15px;color:#383838;--w:165.46px;transform:scaleX(1.0437);">岡山県岡山市北区<span class="d">9-9-9</span></div>
<div class="t fit" style="left:45.7px;top:558.6px;font-size:16.5px;color:#383838;--w:16.3px;transform:scaleX(0.8878);">10</div>
<div class="t fit" style="left:68.5px;top:559.7px;font-size:15px;color:#383838;--w:122.8px;transform:scaleX(1.0233);">有限会社<span class="fw">N</span><span class="fw">O</span><span class="fw">P</span><span class="fw">Q</span></div>
<div class="t fit" style="left:248px;top:558.6px;font-size:16.5px;color:#383838;--w:99.5px;transform:scaleX(0.9682);">0952-56-7890</div>
<div class="t fit" style="left:363.5px;top:559.7px;font-size:15px;color:#383838;--w:158.22px;transform:scaleX(1.0138);">佐賀県佐賀市<span class="d">10-10-10</span></div>
<div class="t fit" style="left:45.7px;top:585.02px;font-size:16.5px;color:#383838;--w:16.3px;transform:scaleX(0.9510);">11</div>
<div class="t fit" style="left:68.5px;top:586.12px;font-size:15px;color:#383838;--w:122.8px;transform:scaleX(1.0233);">株式会社<span class="fw">R</span><span class="fw">S</span><span class="fw">T</span><span class="fw">U</span></div>
<div class="t fit" style="left:248px;top:585.02px;font-size:16.5px;color:#383838;--w:99.5px;transform:scaleX(0.9682);">018-901-2345</div>
<div class="t fit" style="left:363.5px;top:586.12px;font-size:15px;color:#383838;--w:158.22px;transform:scaleX(1.0384);">秋田県秋田市<span class="d">11-11-11</span></div>
<div class="t fit" style="left:45.7px;top:611.44px;font-size:16.5px;color:#383838;--w:16.3px;transform:scaleX(0.8878);">12</div>
<div class="t fit" style="left:68.5px;top:612.54px;font-size:15px;color:#383838;--w:122.8px;transform:scaleX(1.0233);">合名会社<span class="fw">V</span><span class="fw">W</span><span class="fw">X</span><span class="fw">Z</span></div>
<div class="t fit" style="left:248px;top:611.44px;font-size:16.5px;color:#383838;--w:99.5px;transform:scaleX(0.9682);">0749-67-8901</div>
<div class="t fit" style="left:363.5px;top:612.54px;font-size:15px;color:#383838;--w:158.22px;transform:scaleX(1.0138);">滋賀県大津市<span class="d">12-12-12</span></div>
<div class="t fit" style="left:45.7px;top:637.86px;font-size:16.5px;color:#383838;--w:16.3px;transform:scaleX(0.8878);">13</div>
<div class="t fit" style="left:68.5px;top:638.96px;font-size:15px;color:#383838;--w:138.15px;transform:scaleX(1.0233);">株式会社<span class="fw">A</span><span class="fw">B</span><span class="fw">C</span><span class="fw">D</span><span class="fw">E</span></div>
<div class="t fit" style="left:248px;top:637.86px;font-size:16.5px;color:#383838;--w:99.5px;transform:scaleX(0.9682);">029-234-5678</div>
<div class="t fit" style="left:363.5px;top:638.96px;font-size:15px;color:#383838;--w:158.22px;transform:scaleX(1.0138);">茨城県水戸市<span class="d">13-13-13</span></div>
<div class="t fit" style="left:45.7px;top:664.28px;font-size:16.5px;color:#383838;--w:16.3px;transform:scaleX(0.8878);">14</div>
<div class="t fit" style="left:68.5px;top:665.38px;font-size:15px;color:#383838;--w:138.15px;transform:scaleX(1.0233);">有限会社<span class="fw">F</span><span class="fw">G</span><span class="fw">H</span><span class="fw">I</span><span class="fw">J</span></div>
<div class="t fit" style="left:248px;top:664.28px;font-size:16.5px;color:#383838;--w:99.5px;transform:scaleX(0.9682);">082-901-2345</div>
<div class="t fit" style="left:363.5px;top:665.38px;font-size:15px;color:#383838;--w:189.46px;transform:scaleX(1.0183);">広島県広島市中区<span class="d">14-14-14</span></div>
<div class="t fit" style="left:45.7px;top:690.7px;font-size:16.5px;color:#383838;--w:16.3px;transform:scaleX(0.8878);">15</div>
<div class="t fit" style="left:68.5px;top:691.8px;font-size:15px;color:#383838;--w:138.15px;transform:scaleX(1.0233);">合資会社<span class="fw">K</span><span class="fw">L</span><span class="fw">M</span><span class="fw">N</span><span class="fw">O</span></div>
<div class="t fit" style="left:248px;top:690.7px;font-size:16.5px;color:#383838;--w:99.5px;transform:scaleX(0.9682);">088-678-9012</div>
<div class="t fit" style="left:363.5px;top:691.8px;font-size:15px;color:#383838;--w:158.22px;transform:scaleX(1.0138);">徳島県徳島市<span class="d">15-15-15</span></div>
<div class="t fit" style="left:45.7px;top:717.12px;font-size:16.5px;color:#383838;--w:16.3px;transform:scaleX(0.8878);">16</div>
<div class="t fit" style="left:68.5px;top:718.22px;font-size:15px;color:#383838;--w:138.15px;transform:scaleX(1.0233);">株式会社<span class="fw">P</span><span class="fw">Q</span><span class="fw">R</span><span class="fw">S</span><span class="fw">T</span></div>
<div class="t fit" style="left:248px;top:717.12px;font-size:16.5px;color:#383838;--w:99.5px;transform:scaleX(0.9682);">096-345-6789</div>
<div class="t fit" style="left:363.5px;top:718.22px;font-size:15px;color:#383838;--w:205.08px;transform:scaleX(1.0200);">熊本県熊本市中央区<span class="d">16-16-16</span></div>
<div class="t fit" style="left:45.7px;top:743.54px;font-size:16.5px;color:#383838;--w:16.3px;transform:scaleX(0.8878);">17</div>
<div class="t fit" style="left:68.5px;top:744.64px;font-size:15px;color:#383838;--w:138.15px;transform:scaleX(1.0233);">株式会社<span class="fw">U</span><span class="fw">V</span><span class="fw">W</span><span class="fw">X</span><span class="fw">Y</span></div>
<div class="t fit" style="left:248px;top:743.54px;font-size:16.5px;color:#383838;--w:99.5px;transform:scaleX(0.9682);">0268-90-1234</div>
<div class="t fit" style="left:363.5px;top:744.64px;font-size:15px;color:#383838;--w:158.22px;transform:scaleX(1.0138);">長野県松本市<span class="d">17-17-17</span></div>
<div class="t fit" style="left:45.7px;top:769.96px;font-size:16.5px;color:#383838;--w:16.3px;transform:scaleX(0.8878);">18</div>
<div class="t fit" style="left:68.5px;top:771.06px;font-size:15px;color:#383838;--w:122.8px;transform:scaleX(1.0233);">有限会社<span class="fw">Z</span><span class="fw">&amp;</span><span class="fw">C</span><span class="fw">O</span></div>
<div class="t fit" style="left:248px;top:769.96px;font-size:16.5px;color:#383838;--w:99.5px;transform:scaleX(0.9682);">0776-56-7890</div>
<div class="t fit" style="left:363.5px;top:771.06px;font-size:15px;color:#383838;--w:158.22px;transform:scaleX(1.0138);">福井県福井市<span class="d">18-18-18</span></div>
<div class="t fit" style="left:45.7px;top:796.38px;font-size:16.5px;color:#383838;--w:16.3px;transform:scaleX(0.8878);">19</div>
<div class="t fit" style="left:68.5px;top:797.48px;font-size:15px;color:#383838;--w:138.15px;transform:scaleX(1.0233);">合名会社<span class="fw">S</span><span class="fw">T</span><span class="fw">O</span><span class="fw">R</span><span class="fw">E</span></div>
<div class="t fit" style="left:248px;top:796.38px;font-size:16.5px;color:#383838;--w:99.5px;transform:scaleX(0.9682);">0859-01-2345</div>
<div class="t fit" style="left:363.5px;top:797.48px;font-size:15px;color:#383838;--w:158.22px;transform:scaleX(1.0138);">鳥取県鳥取市<span class="d">19-19-19</span></div>
<div class="t fit" style="left:45.7px;top:822.8px;font-size:16.5px;color:#383838;--w:16.3px;transform:scaleX(0.8878);">20</div>
<div class="t fit" style="left:68.5px;top:823.9px;font-size:15px;color:#383838;--w:153.5px;transform:scaleX(1.0233);">株式会社<span class="fw">O</span><span class="fw">F</span><span class="fw">F</span><span class="fw">I</span><span class="fw">C</span><span class="fw">E</span></div>
<div class="t fit" style="left:248px;top:822.8px;font-size:16.5px;color:#383838;--w:99.5px;transform:scaleX(0.9682);">099-890-1234</div>
<div class="t fit" style="left:363.5px;top:823.9px;font-size:15px;color:#383838;--w:189.46px;transform:scaleX(1.0183);">鹿児島県鹿児島市<span class="d">20-20-20</span></div>
</div>
<div class="a" style="left:243.5px;top:552.70px;width:118px;height:29.42px;border:2px solid #1f7044"></div>
<div class="a" style="left:357px;top:578.12px;width:6px;height:5.5px;background:#1d6e42"></div>
<div class="a" style="left:1417.3px;top:264px;width:22.7px;height:574px;background:#4f4f4f"></div>
<div class="a" style="left:1420.5px;top:265.3px;width:17px;height:574.5px;background:#3c3c3c;border-radius:9px"></div>
<svg class="a" style="left:1423px;top:268px" width="12" height="10" viewBox="0 0 12 10"><path d="M1.5 8.5L6 2l4.5 6.5z" fill="#b5b5b5"/></svg>
<div class="a" style="left:1424px;top:283px;width:10px;height:506px;background:linear-gradient(90deg,#b0b0b0,#bdbdbd 50%,#b0b0b0);border-radius:5px"></div>
<svg class="a" style="left:1423px;top:828px" width="12" height="10" viewBox="0 0 12 10"><path d="M1.5 1.5h9L6 8z" fill="#b5b5b5"/></svg>
<div class="a" style="left:0;top:837.5px;width:1440px;height:34.3px;background:#494949"></div>
<div class="a" style="left:0;top:871.3px;width:1440px;height:1.2px;background:#393939"></div>
<svg class="a" style="left:27px;top:847px" width="52" height="16" viewBox="0 0 52 16" fill="none" stroke="#8a8a8a" stroke-width="1.2">
<path d="M9.5 2.5L4 8l5.5 5.5"/><path d="M38 2.5l5.5 5.5L38 13.5"/></svg>
<div class="t fit" style="left:130.2px;top:849.5px;font-size:14.5px;color:#d4d4d4;text-shadow:0.35px 0 0 #d4d4d4;--w:90px;transform:scaleX(1.0000);">顧客企業台帳</div>
<div class="t fit" style="left:245.2px;top:849.5px;font-size:14.5px;color:#d4d4d4;text-shadow:0.35px 0 0 #d4d4d4;--w:75px;transform:scaleX(1.0000);">担当者台帳</div>
<div class="t fit" style="left:347.7px;top:849.5px;font-size:14.5px;color:#d4d4d4;text-shadow:0.35px 0 0 #d4d4d4;--w:46.5px;transform:scaleX(0.7750);">リスト用</div>
<div class="a" style="left:232.0px;top:846px;width:1.1px;height:18.3px;background:#6a6a6a"></div>
<div class="a" style="left:332.0px;top:846px;width:1.1px;height:18.3px;background:#6a6a6a"></div>
<div class="a" style="left:407.0px;top:846px;width:1.1px;height:18.3px;background:#6a6a6a"></div>
<div class="a" style="left:560.3px;top:846px;width:1.1px;height:18.3px;background:#6a6a6a"></div>
<div class="a" style="left:411.7px;top:837.5px;width:145px;height:30.2px;background:#e6e6e6;border-radius:0 0 6px 6px"></div>
<div class="t fit" style="left:419.5px;top:845.5px;font-size:14.5px;color:#2e2e2e;text-shadow:0.3px 0 0 #2e2e2e;--w:129px;transform:scaleX(1.0072);">顧客企業台帳_別解</div>
<div class="a" style="left:420px;top:861.8px;width:128px;height:2.5px;background:#26744a"></div>
<svg class="a" style="left:604px;top:848px" width="15" height="15" viewBox="0 0 15 15" fill="none" stroke="#a0a0a0" stroke-width="1.2">
<path d="M7.5 1.5v11.5M1.8 7.3h11.5"/></svg>
<div class="a" style="left:865.5px;top:850.5px;width:2.6px;height:2.6px;background:#c0c0c0;border-radius:2px"></div>
<div class="a" style="left:865.5px;top:855px;width:2.6px;height:2.6px;background:#c0c0c0;border-radius:2px"></div>
<div class="a" style="left:865.5px;top:859.5px;width:2.6px;height:2.6px;background:#c0c0c0;border-radius:2px"></div>
<div class="a" style="left:884.5px;top:846px;width:535px;height:17px;background:#3c3c3c;border-radius:9px"></div>
<svg class="a" style="left:886px;top:849px" width="10" height="12" viewBox="0 0 10 12"><path d="M8.5 1.5v9L2.5 6z" fill="#b5b5b5"/></svg>
<div class="a" style="left:901.5px;top:850px;width:491.5px;height:9.2px;background:linear-gradient(180deg,#b0b0b0,#bdbdbd 50%,#b0b0b0);border-radius:5px"></div>
<svg class="a" style="left:1406px;top:849px" width="10" height="12" viewBox="0 0 10 12"><path d="M1.5 1.5v9L7.5 6z" fill="#b5b5b5"/></svg>
<div class="a" style="left:0;top:872.5px;width:1440px;height:22px;background:#4d4d4d"></div>
<div class="t fit" style="left:12.6px;top:877.5px;font-size:12.5px;color:#c4c4c4;text-shadow:0.35px 0 0 #c4c4c4;--w:50.5px;transform:scaleX(0.9712);">準備完了</div>
<svg class="a" style="left:82px;top:875.5px" width="18" height="16" viewBox="0 0 18 16" fill="none" stroke="#b0b0b0" stroke-width="1.1">
<path d="M1.5 1.5h13v12h-13z"/><path d="M1.5 4.5h13M3.5 7.5h5M3.5 10.5h4"/><circle cx="12" cy="11" r="2.6"/><circle cx="12" cy="11" r="1" fill="#b0b0b0"/></svg>
<svg class="a" style="left:116px;top:875px" width="18" height="17" viewBox="0 0 18 17" fill="none" stroke="#b0b0b0" stroke-width="1.1">
<circle cx="6.5" cy="3" r="1.8"/><path d="M1.5 5.5l5 1.5 5-1.5M6.5 7v4l-2 5M6.5 11l1.5 3"/><path d="M9 12l2.5 2.5 4.5-6"/></svg>
<div class="t fit" style="left:136px;top:877.5px;font-size:12.5px;color:#c4c4c4;text-shadow:0.35px 0 0 #c4c4c4;--w:157px;transform:scaleX(0.7774);">アクセシビリティ: 問題ありません</div>
<svg class="a" style="left:1128px;top:874px" width="110" height="18" viewBox="0 0 110 18" fill="none" stroke="#666" stroke-width="1.1">
<rect x="2" y="2" width="14" height="13"/><path d="M2 6.5h14M2 11h14M6.7 2v13M11.3 2v13"/>
<rect x="45" y="2" width="14" height="13"/><rect x="48" y="5" width="8" height="7"/>
<rect x="87" y="2" width="14" height="13"/><path d="M91 2v6h6V2"/></svg>
<div class="a" style="left:1250px;top:883px;width:8px;height:1px;background:#666"></div>
<div class="a" style="left:1264px;top:883px;width:105px;height:1.5px;background:#b0b0b0"></div>
<div class="a" style="left:1316px;top:879px;width:1.6px;height:9px;background:#b0b0b0"></div>
<div class="a" style="left:1374px;top:883px;width:9px;height:1px;background:#666"></div>
<div class="a" style="left:1378px;top:879px;width:1px;height:9px;background:#666"></div>
<div class="t fit" style="left:1396px;top:876px;font-size:13px;color:#646464;--w:35px;transform:scaleX(1.0526);">100%</div>
<div class="a" style="left:0;top:894.5px;width:1440px;height:51.5px;background:linear-gradient(90deg,#e3e5e7 0%,#dadfe4 6%,#d2d9e1 18%,#ced5de 40%,#c5ccd8 66%,#d1d8df 88%,#dcdee0 100%)"></div>
<svg class="a" style="left:275px;top:909px" width="25" height="25" viewBox="0 0 25 25">
<defs><linearGradient id="wg2" x1="0" y1="0" x2="1" y2="1"><stop offset="0" stop-color="#52c2f4"/><stop offset="1" stop-color="#0b6fce"/></linearGradient></defs>
<rect x="0" y="0" width="11.8" height="11.8" fill="url(#wg2)"/><rect x="13.2" y="0" width="11.8" height="11.8" fill="url(#wg2)"/>
<rect x="0" y="13.2" width="11.8" height="11.8" fill="url(#wg2)"/><rect x="13.2" y="13.2" width="11.8" height="11.8" fill="url(#wg2)"/></svg>
<div class="a" style="left:314.5px;top:905.3px;width:228.5px;height:31px;background:#e6eaee;border:1px solid #c9d0d8;border-radius:16px;box-shadow:0 1px 1.5px rgba(0,0,0,.12)"></div>
<svg class="a" style="left:324px;top:911px" width="20" height="20" viewBox="0 0 20 20" fill="none" stroke="#2a2a2a" stroke-width="2">
<circle cx="8.5" cy="8.5" r="5.8"/><path d="M12.8 12.8l4.5 4.5"/></svg>
<div class="t fit" style="left:352px;top:912.5px;font-size:14px;color:#6a6a6a;--w:29px;transform:scaleX(1.0357);">検索</div>
<svg class="a" style="left:489px;top:907px" width="52" height="29" viewBox="0 0 52 29">
<path d="M1 28C2 20 4 12 8 6Q12 2 20 2.5L30 1.5Q40 2 45 5C48 10 50 20 51 28Z" fill="#d3a468"/>
<path d="M5 28l3-15h36l3 15z" fill="#c08a4c"/>
<g fill="#e2bd86"><ellipse cx="13" cy="14" rx="3" ry="3.5"/><ellipse cx="21" cy="14" rx="3" ry="3.5"/><ellipse cx="31" cy="14" rx="3" ry="3.5"/><ellipse cx="39" cy="14" rx="3" ry="3.5"/>
<rect x="10" y="17" width="6" height="10"/><rect x="18" y="17" width="6" height="10"/><rect x="28" y="17" width="6" height="10"/><rect x="36" y="17" width="6" height="10"/></g>
<path d="M9 18v10M17 18v10M25 18v10M35 18v10M43 18v10" stroke="#7a5226" stroke-width="1.3"/><rect x="24.5" y="21" width="3.5" height="7" fill="#4a3018"/>
<path d="M6 8h40" stroke="#e8c896" stroke-width="1.2"/></svg>
<svg class="a" style="left:557px;top:909px" width="27" height="25" viewBox="0 0 27 25">
<rect x="8.5" y="0.5" width="17.5" height="17" fill="#f2f2f2" stroke="#dedede"/><rect x="0.5" y="7" width="18" height="17.5" fill="#2d2d2d"/><rect x="8.5" y="7" width="10" height="10.5" fill="#a8a8a8"/></svg>
<svg class="a" style="left:603px;top:908px" width="28" height="26" viewBox="0 0 28 26">
<path d="M0 3h10l3 3h15v19H0z" fill="#e3a21a"/><rect x="0" y="8" width="28" height="17" fill="#ffc73a"/><rect x="9" y="17" width="19" height="8" fill="#1a78d0"/></svg>
<svg class="a" style="left:649px;top:907px" width="28" height="28" viewBox="0 0 28 28">
<path d="M2 3L14 0 27 6 26 24 12 28 1 22z" fill="#21d789"/><path d="M20 2l7 8-3 14z" fill="#fcf84a"/><path d="M4 2l10 0-4 10z" fill="#07c3f2"/>
<rect x="5" y="5" width="18" height="18" fill="#111"/><text x="7" y="14.5" font-size="8.5" font-weight="bold" fill="#fff" font-family="Liberation Sans">PC</text><rect x="7" y="18" width="6" height="1.6" fill="#fff"/></svg>
<svg class="a" style="left:697px;top:903px" width="34" height="32" viewBox="0 0 34 32">
<circle cx="13" cy="18" r="13" fill="#db4437"/><path d="M13 18L24.3 11.5A13 13 0 0 1 13 31z" fill="#f4c20d"/><path d="M13 18L13 31A13 13 0 0 1 1.7 11.5z" fill="#0f9d58"/>
<circle cx="13" cy="18" r="6" fill="#fff"/><circle cx="13" cy="18" r="4.6" fill="#4285f4"/>
<circle cx="25" cy="8" r="8" fill="#3a8fd8"/><path d="M20.5 11l5-6 5 6z" fill="#fff"/></svg>
<svg class="a" style="left:743px;top:903px" width="34" height="32" viewBox="0 0 34 32">
<circle cx="13" cy="18" r="13" fill="#db4437"/><path d="M13 18L24.3 11.5A13 13 0 0 1 13 31z" fill="#f4c20d"/><path d="M13 18L13 31A13 13 0 0 1 1.7 11.5z" fill="#0f9d58"/>
<circle cx="13" cy="18" r="6" fill="#fff"/><circle cx="13" cy="18" r="4.6" fill="#4285f4"/>
<circle cx="25" cy="8" r="8" fill="#e8711c"/><text x="22" y="11.5" font-size="9" fill="#fff" font-family="Liberation Sans">k</text></svg>
<div class="a" style="left:782px;top:900.5px;width:40px;height:40.5px;background:#edf0f4;border:1px solid #d8dde4;border-radius:5px"></div>
<svg class="a" style="left:789px;top:909px" width="27" height="24" viewBox="0 0 27 24">
<rect x="7" y="0" width="19" height="24" rx="1.5" fill="#21a366"/><rect x="7" y="0" width="19" height="7" fill="#33c481"/><rect x="7" y="16" width="19" height="8" fill="#107c41"/>
<rect x="0" y="5" width="14" height="14" rx="1.5" fill="#107c41"/><path d="M3.5 8.5l7 7M10.5 8.5l-7 7" stroke="#fff" stroke-width="2"/></svg>
<div class="a" style="left:794px;top:937.5px;width:16px;height:3px;background:#2a6fd6;border-radius:2px"></div>
<svg class="a" style="left:837px;top:907px" width="24" height="26" viewBox="0 0 24 26">
<rect x="1" y="3" width="19" height="22" rx="2" fill="#8a9ab0"/><rect x="2.5" y="2" width="16" height="20" fill="#f2f2f2"/>
<path d="M5 8h10M5 11h10M5 14h8" stroke="#b0b8c4" stroke-width="1"/><path d="M12 18L21 2l2 1.5-8 16z" fill="#d8a24a"/><path d="M21 2l2 1.5 1-2-2-1.2z" fill="#d04040"/></svg>
<svg class="a" style="left:882px;top:910px" width="27" height="21" viewBox="0 0 27 21">
<rect x="0" y="0" width="27" height="21" rx="2" fill="#3a3a3a"/><rect x="0" y="0" width="27" height="3" fill="#555"/>
<path d="M4 7l5 3.5-5 3.5" stroke="#fff" stroke-width="1.8" fill="none"/><rect x="11" y="14" width="8" height="1.8" fill="#fff"/></svg>
<div class="a" style="left:613px;top:938px;width:6px;height:2.5px;background:#777;border-radius:2px"></div>
<div class="a" style="left:660px;top:938px;width:6px;height:2.5px;background:#777;border-radius:2px"></div>
<div class="a" style="left:706px;top:938px;width:6px;height:2.5px;background:#777;border-radius:2px"></div>
<div class="a" style="left:753px;top:938px;width:6px;height:2.5px;background:#777;border-radius:2px"></div>
<div class="a" style="left:845px;top:938px;width:6px;height:2.5px;background:#777;border-radius:2px"></div>
<div class="a" style="left:892px;top:938px;width:6px;height:2.5px;background:#777;border-radius:2px"></div>
<svg class="a" style="left:989px;top:914px" width="14" height="10" viewBox="0 0 14 10" fill="none" stroke="#333" stroke-width="1.4"><path d="M1.5 8l5.5-5.5 5.5 5.5"/></svg>
<svg class="a" style="left:1020px;top:913px" width="20" height="14" viewBox="0 0 20 14" fill="#e6e9ed" stroke="#444" stroke-width="1.3">
<path d="M5 12.5h10.5a3.5 3.5 0 0 0 .5-7 5 5 0 0 0-9.5-1A4 4 0 0 0 5 12.5z"/></svg>
<svg class="a" style="left:1054px;top:912px" width="20" height="20" viewBox="0 0 20 20">
<path d="M5 1l4 2.5-4 2.5-4-2.5zM13 1l4 2.5-4 2.5-4-2.5zM5 6l4 2.5-4 2.5-4-2.5zM13 6l4 2.5-4 2.5-4-2.5z" fill="#333"/>
<rect x="2" y="9" width="9" height="10" fill="#e02020"/><text x="4" y="17.5" font-size="8" font-weight="bold" fill="#fff" font-family="Liberation Sans">1</text></svg>
<svg class="a" style="left:1090px;top:911px" width="14" height="20" viewBox="0 0 14 20" fill="none" stroke="#2f6fd0" stroke-width="1.6">
<rect x="4" y="1" width="6" height="11" rx="3"/><path d="M1.5 9a5.5 5.5 0 0 0 11 0M7 14.5V19"/></svg>
<div class="t" style="left:1126px;top:912px;font-size:14px;color:#b8b8b8;">A</div>
<div class="a" style="left:1163px;top:913px;width:16px;height:16px;border-radius:8px;background:#2b72d0"></div>
<div class="a" style="left:1173px;top:921px;width:7px;height:7px;border-radius:4px;background:#e05a2a"></div>
<svg class="a" style="left:1202px;top:912px" width="19" height="16" viewBox="0 0 19 16" fill="none" stroke="#333" stroke-width="1.3">
<path d="M1.5 6a11 11 0 0 1 16 0M4.5 9a7 7 0 0 1 10 0M7 11.8a3.5 3.5 0 0 1 5 0"/><circle cx="9.5" cy="14" r="1" fill="#333"/></svg>
<svg class="a" style="left:1227px;top:911px" width="20" height="18" viewBox="0 0 20 18" fill="none" stroke="#333" stroke-width="1.3">
<path d="M2 6h3l4-4v14l-4-4H2z"/><path d="M12 6a4 4 0 0 1 0 6M14.5 3.5a7.5 7.5 0 0 1 0 11M17 1.5a10 10 0 0 1 0 15"/></svg>
<svg class="a" style="left:1252px;top:910px" width="20" height="18" viewBox="0 0 20 18" fill="none" stroke="#333" stroke-width="1.4">
<rect x="1.5" y="5" width="14" height="10" rx="1.5"/><path d="M17 8.5v3" stroke-width="2"/><rect x="3.5" y="7" width="9" height="6" fill="#333"/><path d="M5 1l2 3" /></svg>
<div class="t fit" style="left:1322px;top:906px;font-size:13px;color:#222;--w:31px;transform:scaleX(0.9525);">21:29</div>
<div class="t fit" style="left:1287.5px;top:922.5px;font-size:13px;color:#222;--w:64px;transform:scaleX(0.9983);">2024/07/11</div>
<svg class="a" style="left:1361px;top:912px" width="15" height="19" viewBox="0 0 15 19">
<path d="M7.5 1a5 5 0 0 1 5 5v5l2 3H.5l2-3V6a5 5 0 0 1 5-5z" fill="#0f4fab"/><circle cx="7.5" cy="16.5" r="2" fill="#0f4fab"/></svg>
<svg class="a" style="left:1392px;top:907px" width="30" height="28" viewBox="0 0 30 28">
<defs><linearGradient id="cp2" x1="0" y1="0" x2="0" y2="1"><stop offset="0" stop-color="#2b8ae6"/><stop offset=".55" stop-color="#3fbf6a"/><stop offset="1" stop-color="#f0c030"/></linearGradient>
<linearGradient id="cq2" x1="0" y1="0" x2="0" y2="1"><stop offset="0" stop-color="#2a5ad8"/><stop offset=".4" stop-color="#9a5ae0"/><stop offset="1" stop-color="#f060a8"/></linearGradient></defs>
<path d="M9 3.5h8.5L11 22H3.5z" fill="url(#cp2)" stroke="url(#cp2)" stroke-width="3.5" stroke-linejoin="round"/>
<path d="M17.5 3.5h2.5L26 9l-6 15h-8.5z" fill="url(#cq2)" stroke="url(#cq2)" stroke-width="3.5" stroke-linejoin="round"/>
<rect x="9" y="19.5" width="19.5" height="7.5" rx="1.8" fill="#f2be1a"/><text x="10.8" y="25.8" font-size="6.6" font-weight="bold" fill="#2a2410" font-family="Liberation Sans">PRE</text></svg>
<div class="a" style="left:560px;top:388.5px;width:320px;height:244.5px;background:#dadada;border-radius:8px;box-shadow:0 10px 28px rgba(0,0,0,.34),0 2px 7px rgba(0,0,0,.16),0 0 0 1px rgba(0,0,0,.08)"></div>
<div class="a" style="left:560px;top:388.5px;width:320px;height:48px;background:linear-gradient(180deg,#dde2e6 0%,#dcdfe2 45%,#dadada 100%);border-radius:8px 8px 0 0"></div>
<div class="t fit" style="left:569.3px;top:398.5px;font-size:12.5px;color:#1a1a1a;--w:61px;transform:scaleX(0.9758);">UserForm1</div>
<svg class="a" style="left:858px;top:398px" width="13" height="12" viewBox="0 0 13 12" fill="none" stroke="#222" stroke-width="1.2"><path d="M1 .8l11 10.6M12 .8l-11 10.6"/></svg>
<div class="a" style="left:602px;top:496px;width:126px;height:25.6px;background:#e0e0e0;border-right:2px solid #6e6e6e;border-bottom:2px solid #6e6e6e"></div>
<div class="t fit" style="left:653px;top:503.5px;font-size:12px;color:#333;--w:24px;transform:scaleX(1.0000);">確定</div>
<div class="a" style="left:602.5px;top:437.8px;width:133px;height:32px;background:#e6e6e6;border:2px solid #7c7c7c;border-right-color:#9a9a9a;border-bottom-color:#d0d0d0"></div>
<div class="a" style="left:717.3px;top:440px;width:16px;height:27.5px;background:#dcdcdc;border-right:1.5px solid #707070;border-bottom:1.5px solid #707070"></div>
<svg class="a" style="left:720.5px;top:451.5px" width="10" height="6" viewBox="0 0 10 6"><path d="M.5 0h9L5 5z" fill="#111"/></svg>
<div class="a" style="left:601.8px;top:471px;width:135px;height:40.5px;background:#e8e8e8;border:1.6px solid #2a2a2a"></div>
<div class="a" style="left:603.6px;top:472.6px;width:131.5px;height:12px;border:1px dotted #444"></div>
<div class="t" style="left:613px;top:473.3px;font-size:11.5px;color:#151515;">hoge</div>
<div class="t" style="left:613px;top:486.1px;font-size:11.5px;color:#151515;">fuga</div>
<div class="t" style="left:613px;top:498.9px;font-size:11.5px;color:#151515;">piyo</div>
<svg class="a" style="left:724px;top:458px" width="14" height="22" viewBox="0 0 14 22">
<path d="M1 1v16l4-3.5 3 6.5 2.5-1-3-6.3H12z" fill="#f4f4f4" stroke="#111" stroke-width="1"/></svg>
<div class="a" style="left:1443px;top:405px;width:477px;height:270px;background:#1c1c1c"></div>
<svg class="a" style="left:1616px;top:476px" width="130" height="130" viewBox="0 0 1080 1080">
<defs><clipPath id="cc2"><circle cx="542" cy="530" r="490"/></clipPath></defs>
<circle cx="542" cy="530" r="490" fill="#2d8ac6"/>
<g clip-path="url(#cc2)" fill="#e6e6e6">
<path d="M545 272L270 738H815z"/>
<path d="M568 268L838 518V730z"/>
<g stroke="#e6e6e6" stroke-width="17" fill="none">
<path d="M40 272H545"/><path d="M40 292L500 352"/><path d="M40 318L455 428"/><path d="M40 350L410 503"/><path d="M40 388L365 578"/><path d="M40 432L320 653"/><path d="M40 478L275 730"/>
</g></g>
<circle cx="200" cy="865" r="42" fill="#e6e6e6"/><path d="M165 840A42 42 0 0 0 215 905" stroke="#b03020" stroke-width="12" fill="none"/>
</svg>
<div class="t fit" style="left:1455.5px;top:647px;font-size:19px;color:#e4e4e4;--w:71.5px;transform:scaleX(0.9408);">小川慶一</div></div>
<script>
(function(){
 var els=document.querySelectorAll('.fit');
 for(var i=0;i<els.length;i++){var e=els[i];var w=parseFloat(getComputedStyle(e).getPropertyValue('--w'));
  e.style.transform='none'; var n=e.getBoundingClientRect().width; if(n>0&&w>0){e.style.transform='scaleX('+(w/n)+')';}}
})();
</script>
</body></html>
